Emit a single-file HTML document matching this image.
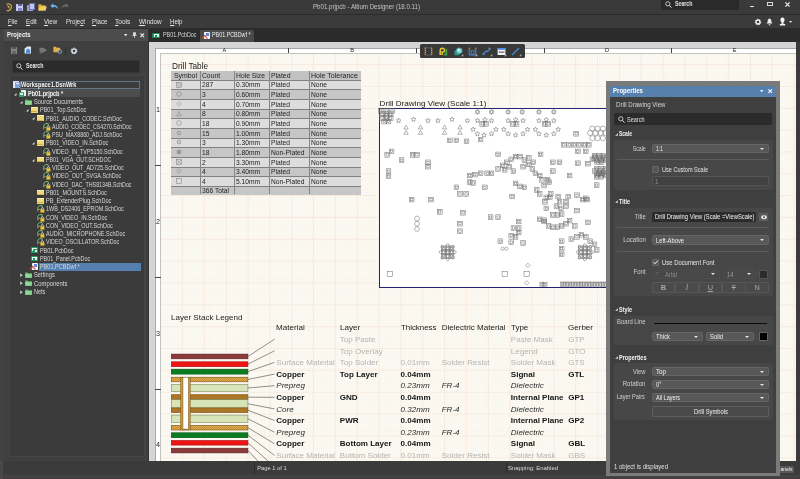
<!DOCTYPE html>
<html><head><meta charset="utf-8"><title>Pb01.prjpcb - Altium Designer (18.0.11)</title>
<style>
html,body{margin:0;padding:0;}
body{width:800px;height:479px;overflow:hidden;background:#3c3c3c;font-family:"Liberation Sans",sans-serif;position:relative;}
#root{position:absolute;left:0;top:0;width:800px;height:479px;overflow:hidden;will-change:transform;}
div{box-sizing:border-box;}
svg{position:absolute;overflow:visible;}
.dd{position:absolute;background:#585858;border:0.6px solid #656565;border-radius:1.5px;}
.dd:after{content:"";position:absolute;right:4px;top:50%;margin-top:-1px;border-left:2px solid transparent;border-right:2px solid transparent;border-top:2.5px solid #e8e8e8;}
.sec{position:absolute;left:614px;width:159px;background:#474747;border-radius:2px;}
.sep{position:absolute;left:617px;width:152px;height:1px;background:#5c5c5c;}
</style></head><body><div id="root">

<div style="position:absolute;left:0px;top:0px;width:800px;height:14px;background:#3a3a3a;"></div>
<div style="position:absolute;left:0px;top:14px;width:800px;height:1px;background:#2c2c2c;"></div>
<div style="position:absolute;left:0px;top:15px;width:800px;height:12.5px;background:#3b3b3b;"></div>
<div style="position:absolute;left:0px;top:27.5px;width:800px;height:14.5px;background:#2b2b2b;"></div>
<div style="position:absolute;top:2.30px;line-height:9px;font-size:7px;color:#c4c4c4;white-space:nowrap;left:313px;transform-origin:0 50%;transform:scaleX(0.877);">Pb01.prjpcb - Altium Designer (18.0.11)</div>
<div style="position:absolute;left:661px;top:0px;width:78px;height:9.6px;background:#2a2a2a;border-radius:0 0 2px 2px;"></div>
<svg style="left:665.3px;top:1.2px" width="7" height="7" viewBox="0 0 7 7"><circle cx="2.8" cy="2.8" r="2.1" fill="none" stroke="#e4e4e4" stroke-width="0.8"/><path d="M4.4 4.4L6.4 6.6" stroke="#e4e4e4" stroke-width="1"/></svg>
<div style="position:absolute;top:0.15px;line-height:8.3px;font-size:6.3px;color:#e0e0e0;white-space:nowrap;left:675px;transform-origin:0 50%;transform:scaleX(0.833);font-weight:bold;">Search</div>
<div style="position:absolute;left:749.5px;top:5.5px;width:4px;height:1.2px;background:#e0e0e0;"></div>
<div style="position:absolute;left:766.5px;top:1.5px;width:6px;height:4.8px;background:transparent;border:0.8px solid #d8d8d8;border-top-width:1.6px;"></div>
<svg style="left:785px;top:2px" width="5" height="5" viewBox="0 0 5 5"><path d="M0.4 0.4L4.6 4.6M4.6 0.4L0.4 4.6" stroke="#f0f0f0" stroke-width="1.2"/></svg>
<svg style="left:5px;top:3px" width="8" height="9" viewBox="0 0 8 9"><path d="M1.5 1.2C4.5 0 7 1.8 6.3 4.6C5.8 6.8 3.5 8.3 1.6 7.6M2.2 3.2C3.8 2.6 4.6 4.2 3.4 5.2" fill="none" stroke="#e2b84c" stroke-width="1.1"/></svg>
<div style="position:absolute;left:16px;top:3.5px;width:7px;height:7px;background:#c9cdf0;border-radius:0.5px;"></div>
<div style="position:absolute;left:17.5px;top:3.5px;width:4px;height:2.5px;background:#5a5fa8;"></div>
<div style="position:absolute;left:17.5px;top:7.5px;width:4px;height:3px;background:#8288c8;"></div>
<div style="position:absolute;left:27px;top:4.5px;width:6px;height:6.5px;background:#9a9fd8;"></div>
<div style="position:absolute;left:29px;top:3px;width:6px;height:6.5px;background:#c0c4ee;border:0.5px solid #6a70b0;"></div>
<svg style="left:38px;top:3px" width="9" height="8" viewBox="0 0 9 8"><path d="M0.3 7.5V1.2H3L3.8 2.2H7.5V7.5Z" fill="#d9a93a"/><path d="M0.3 7.5L1.8 3.6H8.8L7.5 7.5Z" fill="#f1cf6a"/></svg>
<svg style="left:50px;top:3px" width="9" height="7" viewBox="0 0 9 7"><path d="M0.3 2.8L3.2 0.3V1.8C6 1.8 8 3.4 8.2 6.2C7 4.4 5.4 3.9 3.2 4V5.4Z" fill="#6fa8e8"/></svg>
<svg style="left:61px;top:3px" width="8" height="6" viewBox="0 0 8 6"><path d="M7.7 2.5L5 0.3V1.6C2.6 1.6 0.8 3 0.5 5.4C1.6 3.9 3 3.5 5 3.6V4.8Z" fill="#6a6a6a"/></svg>
<div style="position:absolute;top:16.80px;line-height:9px;font-size:7px;color:#e4e4e4;white-space:nowrap;left:8px;transform-origin:0 50%;transform:scaleX(0.842);"><span style="text-decoration:underline">F</span>ile</div>
<div style="position:absolute;top:16.80px;line-height:9px;font-size:7px;color:#e4e4e4;white-space:nowrap;left:25.8px;transform-origin:0 50%;transform:scaleX(0.887);"><span style="text-decoration:underline">E</span>dit</div>
<div style="position:absolute;top:16.80px;line-height:9px;font-size:7px;color:#e4e4e4;white-space:nowrap;left:44px;transform-origin:0 50%;transform:scaleX(0.864);"><span style="text-decoration:underline">V</span>iew</div>
<div style="position:absolute;top:16.80px;line-height:9px;font-size:7px;color:#e4e4e4;white-space:nowrap;left:65.5px;transform-origin:0 50%;transform:scaleX(0.872);">Proje<span style="text-decoration:underline">c</span>t</div>
<div style="position:absolute;top:16.80px;line-height:9px;font-size:7px;color:#e4e4e4;white-space:nowrap;left:92px;transform-origin:0 50%;transform:scaleX(0.885);"><span style="text-decoration:underline">P</span>lace</div>
<div style="position:absolute;top:16.80px;line-height:9px;font-size:7px;color:#e4e4e4;white-space:nowrap;left:115.2px;transform-origin:0 50%;transform:scaleX(0.936);"><span style="text-decoration:underline">T</span>ools</div>
<div style="position:absolute;top:16.80px;line-height:9px;font-size:7px;color:#e4e4e4;white-space:nowrap;left:138.5px;transform-origin:0 50%;transform:scaleX(0.912);"><span style="text-decoration:underline">W</span>indow</div>
<div style="position:absolute;top:16.80px;line-height:9px;font-size:7px;color:#e4e4e4;white-space:nowrap;left:169.5px;transform-origin:0 50%;transform:scaleX(0.868);"><span style="text-decoration:underline">H</span>elp</div>
<svg style="left:753.5px;top:17.5px" width="8" height="8" viewBox="0 0 8 8"><circle cx="4" cy="4" r="2.3" fill="none" stroke="#eee" stroke-width="1.7" stroke-dasharray="1.2 0.6"/><circle cx="4" cy="4" r="1.9" fill="none" stroke="#eee" stroke-width="1.1"/></svg>
<svg style="left:766px;top:17.5px" width="7" height="8" viewBox="0 0 7 8"><path d="M3.5 0.5C1.8 0.8 1.6 2.5 1.6 4L0.6 5.6H6.4L5.4 4C5.4 2.5 5.2 0.8 3.5 0.5ZM2.7 6.2H4.3V7.2H2.7Z" fill="#eee"/></svg>
<svg style="left:778.5px;top:17px" width="7" height="9" viewBox="0 0 7 9"><path d="M3.5 0.4C1.7 0.4 1.3 2 1.5 3.4C1.7 4.6 2.4 5.3 2.8 5.6V6.4L0.8 7.2V8.6H6.2V7.2L4.2 6.4V5.6C4.6 5.3 5.3 4.6 5.5 3.4C5.7 2 5.3 0.4 3.5 0.4Z" fill="#f2f2f2"/></svg>
<svg style="left:789.3px;top:20.6px" width="3.2" height="2" viewBox="0 0 3.2 2"><path d="M0 0H3.2L1.6 2Z" fill="#e0e0e0"/></svg>
<div style="position:absolute;left:0px;top:29.3px;width:149px;height:431.7px;background:#3f3f3f;"></div>
<div style="position:absolute;left:0px;top:29.3px;width:3.5px;height:449.7px;background:#424244;"></div>
<div style="position:absolute;left:4px;top:29.4px;width:143.5px;height:11.8px;background:#4c4c4c;"></div>
<div style="position:absolute;left:147.5px;top:28.5px;width:1.5px;height:432.5px;background:#333;"></div>
<div style="position:absolute;top:30.30px;line-height:9px;font-size:7px;color:#f2f2f2;white-space:nowrap;left:7px;transform-origin:0 50%;transform:scaleX(0.851);font-weight:bold;">Projects</div>
<svg style="left:124.3px;top:33.8px" width="3.4" height="2.2" viewBox="0 0 3.4 2.2"><path d="M0 0H3.4L1.7 2.2Z" fill="#ececec"/></svg>
<svg style="left:131.5px;top:32px" width="5" height="6" viewBox="0 0 5 6"><path d="M1.2 0.3H3.8V3H4.6V3.8H2.9V5.8H2.1V3.8H0.4V3H1.2Z" fill="#e8e8e8"/></svg>
<svg style="left:140px;top:33px" width="4.5" height="4.5" viewBox="0 0 5 5"><path d="M0.5 0.5L4.5 4.5M4.5 0.5L0.5 4.5" stroke="#f0f0f0" stroke-width="1.2"/></svg>
<div style="position:absolute;left:10.5px;top:47px;width:6.5px;height:6.5px;background:#858585;border-radius:0.5px;"></div>
<div style="position:absolute;left:12px;top:47px;width:3.5px;height:2.2px;background:#555;"></div>
<div style="position:absolute;left:12px;top:50.5px;width:3.5px;height:3px;background:#666;"></div>
<svg style="left:24px;top:46px" width="8" height="8" viewBox="0 0 8 8"><path d="M0.6 2.6L3.4 0.6H7V7.6H0.6Z" fill="#dfe7f5"/><path d="M2 4L4.2 2.6L6.2 4V7H2Z" fill="#4f8fdc"/></svg>
<svg style="left:38.5px;top:46.5px" width="9" height="7" viewBox="0 0 9 7"><path d="M0.5 0.8H4.5L8 3.2L4.5 5.4H2.5V6.8H1.5V5.4H0.5Z" fill="#757575"/></svg>
<svg style="left:52.5px;top:46px" width="10" height="8" viewBox="0 0 10 8"><path d="M0.4 6.2V0.8H3L3.8 1.8H7.2V6.2Z" fill="#e0b243"/><circle cx="7" cy="5.6" r="1.7" fill="#3d3d3d" stroke="#8fb1dd" stroke-width="0.9"/></svg>
<div style="position:absolute;left:64.5px;top:46.5px;width:0.8px;height:8px;background:#2e2e2e;"></div>
<svg style="left:69.5px;top:46.5px" width="8" height="8" viewBox="0 0 8 8"><circle cx="4" cy="4" r="2.4" fill="none" stroke="#d4dbe6" stroke-width="1.9" stroke-dasharray="1.3 0.6"/><circle cx="4" cy="4" r="2" fill="none" stroke="#d4dbe6" stroke-width="1.2"/></svg>
<div style="position:absolute;left:12px;top:60px;width:128px;height:12.5px;background:#2b2b2b;border-radius:2px;border:0.5px solid #353535;"></div>
<svg style="left:15.6px;top:62.6px" width="7" height="7" viewBox="0 0 7 7"><circle cx="2.8" cy="2.8" r="2.1" fill="none" stroke="#e4e4e4" stroke-width="0.8"/><path d="M4.4 4.4L6.4 6.6" stroke="#e4e4e4" stroke-width="1"/></svg>
<div style="position:absolute;top:62.25px;line-height:8.3px;font-size:6.3px;color:#e8e8e8;white-space:nowrap;left:25.6px;transform-origin:0 50%;transform:scaleX(0.833);font-weight:bold;">Search</div>
<div style="position:absolute;left:8.8px;top:74.5px;width:136.5px;height:382px;background:#3b3b3b;border:0.7px solid #464646;"></div>
<div style="position:absolute;left:20.3px;top:80.8px;width:120.2px;height:8.1px;background:#3b3b3b;border:0.7px solid #66758a;"></div>
<div style="position:absolute;left:12.5px;top:81.1px;width:6.5px;height:7px;background:#dfe8f6;border-radius:0.6px;"></div>
<div style="position:absolute;left:14.5px;top:82.39999999999999px;width:5px;height:5.2px;background:#7fa4dc;border-radius:0.5px;"></div>
<div style="position:absolute;left:15.5px;top:83.39999999999999px;width:3px;height:1px;background:#e8f0fb;"></div>
<div style="position:absolute;top:81.15px;line-height:8.5px;font-size:6.5px;color:#f4f4f4;white-space:nowrap;left:21.3px;transform-origin:0 50%;transform:scaleX(0.860);font-weight:bold;">Workspace1.DsnWrk</div>
<div style="position:absolute;left:20.3px;top:89.45px;width:120.2px;height:7.8px;background:#4d4d4d;"></div>
<svg style="left:13.8px;top:92.55px" width="2.6" height="2.6" viewBox="0 0 4 4"><path d="M3.9 0.1V3.9H0.1Z" fill="#e4e4e4"/></svg>
<div style="position:absolute;left:20.5px;top:89.75px;width:5.2px;height:6.6px;background:#e8f2f5;border-radius:0.5px;"></div>
<div style="position:absolute;left:18.5px;top:91.95px;width:5.6px;height:4.6px;background:#2aa267;border-radius:0.4px;"></div>
<div style="position:absolute;left:20px;top:93.35px;width:2.6px;height:1.6px;background:#d6f3e2;"></div>
<div style="position:absolute;top:89.80px;line-height:8.5px;font-size:6.5px;color:#f4f4f4;white-space:nowrap;left:27.6px;transform-origin:0 50%;transform:scaleX(0.845);font-weight:bold;">Pb01.prjpcb *</div>
<svg style="left:20.3px;top:100.80px" width="2.6" height="2.6" viewBox="0 0 4 4"><path d="M3.9 0.1V3.9H0.1Z" fill="#e4e4e4"/></svg>
<svg style="left:24.6px;top:98.80px" width="7" height="6" viewBox="0 0 7 6"><path d="M0.2 5.8V0.4H2.6L3.2 1.2H6.8V5.8Z" fill="#5fbb6c"/><path d="M0.2 5.8V2H6.8V5.8Z" fill="#8fd694"/></svg>
<div style="position:absolute;top:98.05px;line-height:8.5px;font-size:6.5px;color:#d8d8d8;white-space:nowrap;left:33.8px;transform-origin:0 50%;transform:scaleX(0.885);">Source Documents</div>
<svg style="left:26.400000000000002px;top:109.05px" width="2.6" height="2.6" viewBox="0 0 4 4"><path d="M3.9 0.1V3.9H0.1Z" fill="#e4e4e4"/></svg>
<div style="position:absolute;left:30.5px;top:107.05px;width:7px;height:5.8px;background:#efd976;border-top:1.7px solid #fbf1bd;border-radius:0.3px;"></div>
<div style="position:absolute;left:31.3px;top:111.25px;width:5.4px;height:0.8px;background:#cfae4e;"></div>
<div style="position:absolute;top:106.30px;line-height:8.5px;font-size:6.5px;color:#d8d8d8;white-space:nowrap;left:40.1px;transform-origin:0 50%;transform:scaleX(0.850);">PB01_Top.SchDoc</div>
<svg style="left:32.400000000000006px;top:117.30px" width="2.6" height="2.6" viewBox="0 0 4 4"><path d="M3.9 0.1V3.9H0.1Z" fill="#e4e4e4"/></svg>
<div style="position:absolute;left:36.5px;top:115.3px;width:7px;height:5.8px;background:#efd976;border-top:1.7px solid #fbf1bd;border-radius:0.3px;"></div>
<div style="position:absolute;left:37.3px;top:119.5px;width:5.4px;height:0.8px;background:#cfae4e;"></div>
<div style="position:absolute;top:114.55px;line-height:8.5px;font-size:6.5px;color:#d8d8d8;white-space:nowrap;left:46.1px;transform-origin:0 50%;transform:scaleX(0.827);">PB01_AUDIO_CODEC.SchDoc</div>
<svg style="left:42.900000000000006px;top:122.75px" width="7.6" height="7.8" viewBox="0 0 7.6 7.8"><path d="M0.8 6.4V2.2L2.6 0.6H5.2V2.6" fill="none" stroke="#7cc47e" stroke-width="0.9"/><path d="M1.2 4.4H3.4" stroke="#7cc47e" stroke-width="0.8"/><path d="M4.4 4.4V3.6C4.4 2.4 6.4 2.4 6.4 3.6V4.4" fill="none" stroke="#f3f0d8" stroke-width="0.8"/><rect x="3.4" y="4.3" width="4" height="3.3" fill="#e9c23f"/></svg>
<div style="position:absolute;top:122.80px;line-height:8.5px;font-size:6.5px;color:#d8d8d8;white-space:nowrap;left:52.1px;transform-origin:0 50%;transform:scaleX(0.800);">AUDIO_CODEC_CS4270.SchDoc</div>
<svg style="left:42.900000000000006px;top:131.00px" width="7.6" height="7.8" viewBox="0 0 7.6 7.8"><path d="M0.8 6.4V2.2L2.6 0.6H5.2V2.6" fill="none" stroke="#7cc47e" stroke-width="0.9"/><path d="M1.2 4.4H3.4" stroke="#7cc47e" stroke-width="0.8"/><path d="M4.4 4.4V3.6C4.4 2.4 6.4 2.4 6.4 3.6V4.4" fill="none" stroke="#f3f0d8" stroke-width="0.8"/><rect x="3.4" y="4.3" width="4" height="3.3" fill="#e9c23f"/></svg>
<div style="position:absolute;top:131.05px;line-height:8.5px;font-size:6.5px;color:#d8d8d8;white-space:nowrap;left:52.1px;transform-origin:0 50%;transform:scaleX(0.813);">PSU_MAX8860_ADJ.SchDoc</div>
<svg style="left:32.400000000000006px;top:142.05px" width="2.6" height="2.6" viewBox="0 0 4 4"><path d="M3.9 0.1V3.9H0.1Z" fill="#e4e4e4"/></svg>
<div style="position:absolute;left:36.5px;top:140.04999999999998px;width:7px;height:5.8px;background:#efd976;border-top:1.7px solid #fbf1bd;border-radius:0.3px;"></div>
<div style="position:absolute;left:37.3px;top:144.24999999999997px;width:5.4px;height:0.8px;background:#cfae4e;"></div>
<div style="position:absolute;top:139.30px;line-height:8.5px;font-size:6.5px;color:#d8d8d8;white-space:nowrap;left:46.1px;transform-origin:0 50%;transform:scaleX(0.836);">PB01_VIDEO_IN.SchDoc</div>
<svg style="left:42.900000000000006px;top:147.50px" width="7.6" height="7.8" viewBox="0 0 7.6 7.8"><path d="M0.8 6.4V2.2L2.6 0.6H5.2V2.6" fill="none" stroke="#7cc47e" stroke-width="0.9"/><path d="M1.2 4.4H3.4" stroke="#7cc47e" stroke-width="0.8"/><path d="M4.4 4.4V3.6C4.4 2.4 6.4 2.4 6.4 3.6V4.4" fill="none" stroke="#f3f0d8" stroke-width="0.8"/><rect x="3.4" y="4.3" width="4" height="3.3" fill="#e9c23f"/></svg>
<div style="position:absolute;top:147.55px;line-height:8.5px;font-size:6.5px;color:#d8d8d8;white-space:nowrap;left:52.1px;transform-origin:0 50%;transform:scaleX(0.826);">VIDEO_IN_TVP5150.SchDoc</div>
<svg style="left:32.400000000000006px;top:158.55px" width="2.6" height="2.6" viewBox="0 0 4 4"><path d="M3.9 0.1V3.9H0.1Z" fill="#e4e4e4"/></svg>
<div style="position:absolute;left:36.5px;top:156.54999999999998px;width:7px;height:5.8px;background:#efd976;border-top:1.7px solid #fbf1bd;border-radius:0.3px;"></div>
<div style="position:absolute;left:37.3px;top:160.74999999999997px;width:5.4px;height:0.8px;background:#cfae4e;"></div>
<div style="position:absolute;top:155.80px;line-height:8.5px;font-size:6.5px;color:#d8d8d8;white-space:nowrap;left:46.1px;transform-origin:0 50%;transform:scaleX(0.819);">PB01_VGA_OUT.SCHDOC</div>
<svg style="left:42.900000000000006px;top:164.00px" width="7.6" height="7.8" viewBox="0 0 7.6 7.8"><path d="M0.8 6.4V2.2L2.6 0.6H5.2V2.6" fill="none" stroke="#7cc47e" stroke-width="0.9"/><path d="M1.2 4.4H3.4" stroke="#7cc47e" stroke-width="0.8"/><path d="M4.4 4.4V3.6C4.4 2.4 6.4 2.4 6.4 3.6V4.4" fill="none" stroke="#f3f0d8" stroke-width="0.8"/><rect x="3.4" y="4.3" width="4" height="3.3" fill="#e9c23f"/></svg>
<div style="position:absolute;top:164.05px;line-height:8.5px;font-size:6.5px;color:#d8d8d8;white-space:nowrap;left:52.1px;transform-origin:0 50%;transform:scaleX(0.837);">VIDEO_OUT_AD725.SchDoc</div>
<svg style="left:42.900000000000006px;top:172.25px" width="7.6" height="7.8" viewBox="0 0 7.6 7.8"><path d="M0.8 6.4V2.2L2.6 0.6H5.2V2.6" fill="none" stroke="#7cc47e" stroke-width="0.9"/><path d="M1.2 4.4H3.4" stroke="#7cc47e" stroke-width="0.8"/><path d="M4.4 4.4V3.6C4.4 2.4 6.4 2.4 6.4 3.6V4.4" fill="none" stroke="#f3f0d8" stroke-width="0.8"/><rect x="3.4" y="4.3" width="4" height="3.3" fill="#e9c23f"/></svg>
<div style="position:absolute;top:172.30px;line-height:8.5px;font-size:6.5px;color:#d8d8d8;white-space:nowrap;left:52.1px;transform-origin:0 50%;transform:scaleX(0.826);">VIDEO_OUT_SVGA.SchDoc</div>
<svg style="left:42.900000000000006px;top:180.50px" width="7.6" height="7.8" viewBox="0 0 7.6 7.8"><path d="M0.8 6.4V2.2L2.6 0.6H5.2V2.6" fill="none" stroke="#7cc47e" stroke-width="0.9"/><path d="M1.2 4.4H3.4" stroke="#7cc47e" stroke-width="0.8"/><path d="M4.4 4.4V3.6C4.4 2.4 6.4 2.4 6.4 3.6V4.4" fill="none" stroke="#f3f0d8" stroke-width="0.8"/><rect x="3.4" y="4.3" width="4" height="3.3" fill="#e9c23f"/></svg>
<div style="position:absolute;top:180.55px;line-height:8.5px;font-size:6.5px;color:#d8d8d8;white-space:nowrap;left:52.1px;transform-origin:0 50%;transform:scaleX(0.815);">VIDEO_DAC_THS8134B.SchDoc</div>
<div style="position:absolute;left:36.5px;top:189.54999999999998px;width:7px;height:5.8px;background:#efd976;border-top:1.7px solid #fbf1bd;border-radius:0.3px;"></div>
<div style="position:absolute;left:37.3px;top:193.74999999999997px;width:5.4px;height:0.8px;background:#cfae4e;"></div>
<div style="position:absolute;top:188.80px;line-height:8.5px;font-size:6.5px;color:#d8d8d8;white-space:nowrap;left:46.1px;transform-origin:0 50%;transform:scaleX(0.840);">PB01_MOUNTS.SchDoc</div>
<div style="position:absolute;left:36.5px;top:197.79999999999998px;width:7px;height:5.8px;background:#efd976;border-top:1.7px solid #fbf1bd;border-radius:0.3px;"></div>
<div style="position:absolute;left:37.3px;top:201.99999999999997px;width:5.4px;height:0.8px;background:#cfae4e;"></div>
<div style="position:absolute;top:197.05px;line-height:8.5px;font-size:6.5px;color:#d8d8d8;white-space:nowrap;left:46.1px;transform-origin:0 50%;transform:scaleX(0.862);">PB_ExtenderPlug.SchDoc</div>
<svg style="left:36.900000000000006px;top:205.25px" width="7.6" height="7.8" viewBox="0 0 7.6 7.8"><path d="M0.8 6.4V2.2L2.6 0.6H5.2V2.6" fill="none" stroke="#7cc47e" stroke-width="0.9"/><path d="M1.2 4.4H3.4" stroke="#7cc47e" stroke-width="0.8"/><path d="M4.4 4.4V3.6C4.4 2.4 6.4 2.4 6.4 3.6V4.4" fill="none" stroke="#f3f0d8" stroke-width="0.8"/><rect x="3.4" y="4.3" width="4" height="3.3" fill="#e9c23f"/></svg>
<div style="position:absolute;top:205.30px;line-height:8.5px;font-size:6.5px;color:#d8d8d8;white-space:nowrap;left:46.1px;transform-origin:0 50%;transform:scaleX(0.834);">1WB_DS2406_EPROM.SchDoc</div>
<svg style="left:36.900000000000006px;top:213.50px" width="7.6" height="7.8" viewBox="0 0 7.6 7.8"><path d="M0.8 6.4V2.2L2.6 0.6H5.2V2.6" fill="none" stroke="#7cc47e" stroke-width="0.9"/><path d="M1.2 4.4H3.4" stroke="#7cc47e" stroke-width="0.8"/><path d="M4.4 4.4V3.6C4.4 2.4 6.4 2.4 6.4 3.6V4.4" fill="none" stroke="#f3f0d8" stroke-width="0.8"/><rect x="3.4" y="4.3" width="4" height="3.3" fill="#e9c23f"/></svg>
<div style="position:absolute;top:213.55px;line-height:8.5px;font-size:6.5px;color:#d8d8d8;white-space:nowrap;left:46.1px;transform-origin:0 50%;transform:scaleX(0.839);">CON_VIDEO_IN.SchDoc</div>
<svg style="left:36.900000000000006px;top:221.75px" width="7.6" height="7.8" viewBox="0 0 7.6 7.8"><path d="M0.8 6.4V2.2L2.6 0.6H5.2V2.6" fill="none" stroke="#7cc47e" stroke-width="0.9"/><path d="M1.2 4.4H3.4" stroke="#7cc47e" stroke-width="0.8"/><path d="M4.4 4.4V3.6C4.4 2.4 6.4 2.4 6.4 3.6V4.4" fill="none" stroke="#f3f0d8" stroke-width="0.8"/><rect x="3.4" y="4.3" width="4" height="3.3" fill="#e9c23f"/></svg>
<div style="position:absolute;top:221.80px;line-height:8.5px;font-size:6.5px;color:#d8d8d8;white-space:nowrap;left:46.1px;transform-origin:0 50%;transform:scaleX(0.839);">CON_VIDEO_OUT.SchDoc</div>
<svg style="left:36.900000000000006px;top:230.00px" width="7.6" height="7.8" viewBox="0 0 7.6 7.8"><path d="M0.8 6.4V2.2L2.6 0.6H5.2V2.6" fill="none" stroke="#7cc47e" stroke-width="0.9"/><path d="M1.2 4.4H3.4" stroke="#7cc47e" stroke-width="0.8"/><path d="M4.4 4.4V3.6C4.4 2.4 6.4 2.4 6.4 3.6V4.4" fill="none" stroke="#f3f0d8" stroke-width="0.8"/><rect x="3.4" y="4.3" width="4" height="3.3" fill="#e9c23f"/></svg>
<div style="position:absolute;top:230.05px;line-height:8.5px;font-size:6.5px;color:#d8d8d8;white-space:nowrap;left:46.1px;transform-origin:0 50%;transform:scaleX(0.847);">AUDIO_MICROPHONE.SchDoc</div>
<svg style="left:36.900000000000006px;top:238.25px" width="7.6" height="7.8" viewBox="0 0 7.6 7.8"><path d="M0.8 6.4V2.2L2.6 0.6H5.2V2.6" fill="none" stroke="#7cc47e" stroke-width="0.9"/><path d="M1.2 4.4H3.4" stroke="#7cc47e" stroke-width="0.8"/><path d="M4.4 4.4V3.6C4.4 2.4 6.4 2.4 6.4 3.6V4.4" fill="none" stroke="#f3f0d8" stroke-width="0.8"/><rect x="3.4" y="4.3" width="4" height="3.3" fill="#e9c23f"/></svg>
<div style="position:absolute;top:238.30px;line-height:8.5px;font-size:6.5px;color:#d8d8d8;white-space:nowrap;left:46.1px;transform-origin:0 50%;transform:scaleX(0.823);">VIDEO_OSCILLATOR.SchDoc</div>
<div style="position:absolute;left:30.6px;top:247.29999999999998px;width:7.4px;height:5.6px;background:#1f9d62;border-radius:0.4px;"></div>
<div style="position:absolute;left:31.6px;top:248.29999999999998px;width:1px;height:3.2px;background:#e8fff0;"></div>
<div style="position:absolute;left:33.2px;top:248.29999999999998px;width:3.6px;height:0.9px;background:#e8fff0;"></div>
<div style="position:absolute;left:35.0px;top:249.89999999999998px;width:2px;height:2px;background:#c8f5d8;"></div>
<div style="position:absolute;top:246.55px;line-height:8.5px;font-size:6.5px;color:#d8d8d8;white-space:nowrap;left:40.1px;transform-origin:0 50%;transform:scaleX(0.823);">PB01.PcbDoc</div>
<div style="position:absolute;left:30.6px;top:255.55px;width:7.4px;height:5.6px;background:#1f9d62;border-radius:0.4px;"></div>
<div style="position:absolute;left:31.6px;top:256.55px;width:1px;height:3.2px;background:#e8fff0;"></div>
<div style="position:absolute;left:33.2px;top:256.55px;width:3.6px;height:0.9px;background:#e8fff0;"></div>
<div style="position:absolute;left:35.0px;top:258.15000000000003px;width:2px;height:2px;background:#c8f5d8;"></div>
<div style="position:absolute;top:254.80px;line-height:8.5px;font-size:6.5px;color:#d8d8d8;white-space:nowrap;left:40.1px;transform-origin:0 50%;transform:scaleX(0.825);">PB01_Panel.PcbDoc</div>
<div style="position:absolute;left:38.5px;top:262.6px;width:102px;height:8px;background:#557fb0;"></div>
<div style="position:absolute;left:32.2px;top:263.2px;width:5.4px;height:7px;background:#f4f6fb;border-radius:0.4px;"></div>
<div style="position:absolute;left:33.6px;top:264.2px;width:3.2px;height:3px;background:#5f86d8;"></div>
<svg style="left:29.6px;top:266.20px" width="6" height="4" viewBox="0 0 6 4"><path d="M0.3 3.6L2.6 0.4L5.4 3.6" fill="none" stroke="#d4503c" stroke-width="1.1"/></svg>
<div style="position:absolute;top:263.05px;line-height:8.5px;font-size:6.5px;color:#d8d8d8;white-space:nowrap;left:40.1px;transform-origin:0 50%;transform:scaleX(0.850);">PB01.PCBDwf *</div>
<svg style="left:20.1px;top:273.05px" width="3" height="4.4" viewBox="0 0 3 4.4"><path d="M0.3 0.3L2.7 2.2L0.3 4.1Z" fill="#dcdcdc"/></svg>
<svg style="left:24.8px;top:272.05px" width="7" height="6" viewBox="0 0 7 6"><path d="M0.2 5.8V0.4H2.6L3.2 1.2H6.8V5.8Z" fill="#5fbb6c"/><path d="M0.2 5.8V2H6.8V5.8Z" fill="#8fd694"/></svg>
<div style="position:absolute;top:271.30px;line-height:8.5px;font-size:6.5px;color:#d8d8d8;white-space:nowrap;left:33.8px;transform-origin:0 50%;transform:scaleX(0.886);">Settings</div>
<svg style="left:20.1px;top:281.30px" width="3" height="4.4" viewBox="0 0 3 4.4"><path d="M0.3 0.3L2.7 2.2L0.3 4.1Z" fill="#dcdcdc"/></svg>
<svg style="left:24.8px;top:280.30px" width="7" height="6" viewBox="0 0 7 6"><path d="M0.2 5.8V0.4H2.6L3.2 1.2H6.8V5.8Z" fill="#5fbb6c"/><path d="M0.2 5.8V2H6.8V5.8Z" fill="#8fd694"/></svg>
<div style="position:absolute;top:279.55px;line-height:8.5px;font-size:6.5px;color:#d8d8d8;white-space:nowrap;left:33.8px;transform-origin:0 50%;transform:scaleX(0.906);">Components</div>
<svg style="left:20.1px;top:289.55px" width="3" height="4.4" viewBox="0 0 3 4.4"><path d="M0.3 0.3L2.7 2.2L0.3 4.1Z" fill="#dcdcdc"/></svg>
<svg style="left:24.8px;top:288.55px" width="7" height="6" viewBox="0 0 7 6"><path d="M0.2 5.8V0.4H2.6L3.2 1.2H6.8V5.8Z" fill="#5fbb6c"/><path d="M0.2 5.8V2H6.8V5.8Z" fill="#8fd694"/></svg>
<div style="position:absolute;top:287.80px;line-height:8.5px;font-size:6.5px;color:#d8d8d8;white-space:nowrap;left:33.8px;transform-origin:0 50%;transform:scaleX(0.845);">Nets</div>
<div style="position:absolute;left:149.5px;top:30px;width:1.5px;height:11.5px;background:#2b2b2b;"></div>
<div style="position:absolute;left:200px;top:29.5px;width:53.5px;height:12px;background:#4b4b4b;border-radius:1.5px 1.5px 0 0"></div>
<div style="position:absolute;left:152.3px;top:32.6px;width:7.8px;height:5.6px;background:#1b8658;border-radius:0.4px;"></div>
<div style="position:absolute;left:153.5px;top:33.5px;width:1px;height:3.4px;background:#e8fff0;"></div>
<div style="position:absolute;left:155.2px;top:33.5px;width:3.8px;height:0.9px;background:#e8fff0;"></div>
<div style="position:absolute;left:157px;top:35px;width:2px;height:2px;background:#c8f5d8;"></div>
<div style="position:absolute;top:31.35px;line-height:8.5px;font-size:6.5px;color:#d6d6d6;white-space:nowrap;left:162.5px;transform-origin:0 50%;transform:scaleX(0.828);">PB01.PcbDoc</div>
<div style="position:absolute;left:204.2px;top:32px;width:5.4px;height:7px;background:#f4f6fb;border-radius:0.4px;"></div>
<div style="position:absolute;left:205.6px;top:33px;width:3.2px;height:3px;background:#5f86d8;"></div>
<svg style="left:201.5px;top:35px" width="6" height="4" viewBox="0 0 6 4"><path d="M0.3 3.6L2.6 0.4L5.4 3.6" fill="none" stroke="#d4503c" stroke-width="1.1"/></svg>
<div style="position:absolute;top:31.35px;line-height:8.5px;font-size:6.5px;color:#ececec;white-space:nowrap;left:212px;transform-origin:0 50%;transform:scaleX(0.826);">PB01.PCBDwf *</div>
<div id="doc" style="position:absolute;left:149px;top:42px;width:647px;height:419px;background:#d5d5d5;overflow:hidden;">
<div style="position:absolute;left:5.8px;top:5.9px;width:700px;height:500px;background:#fff;border:0.6px solid #a8a8a8;"></div>
<div style="position:absolute;left:10.9px;top:11px;width:700px;height:500px;border:0.7px solid #c4c4c4;background-color:#fcfaf4;background-image:linear-gradient(to right,#f7eade 0,#f7eade 0.7px,transparent 0.7px),linear-gradient(to bottom,#f7eade 0,#f7eade 0.7px,transparent 0.7px),linear-gradient(to right,rgba(225,200,170,0.07) 0,rgba(225,200,170,0.07) 0.7px,transparent 0.7px),linear-gradient(to bottom,rgba(225,200,170,0.07) 0,rgba(225,200,170,0.07) 0.7px,transparent 0.7px);background-size:21.85px 21.85px,21.85px 21.85px,2.185px 2.185px,2.185px 2.185px;background-position:21px 10.1px,21px 10.1px,21px 10.1px,21px 10.1px;"></div>
</div>
<div style="position:absolute;top:47.20px;line-height:7.6px;font-size:5.6px;color:#222;white-space:nowrap;left:224.3px;transform:translateX(-50%);">A</div>
<div style="position:absolute;top:47.20px;line-height:7.6px;font-size:5.6px;color:#222;white-space:nowrap;left:352px;transform:translateX(-50%);">B</div>
<div style="position:absolute;top:47.20px;line-height:7.6px;font-size:5.6px;color:#222;white-space:nowrap;left:479.8px;transform:translateX(-50%);">C</div>
<div style="position:absolute;top:47.20px;line-height:7.6px;font-size:5.6px;color:#222;white-space:nowrap;left:607px;transform:translateX(-50%);">D</div>
<div style="position:absolute;top:47.20px;line-height:7.6px;font-size:5.6px;color:#222;white-space:nowrap;left:734.5px;transform:translateX(-50%);">E</div>
<div style="position:absolute;left:288.2px;top:48.3px;width:0.7px;height:5.2px;background:#444;"></div>
<div style="position:absolute;left:415.9px;top:48.3px;width:0.7px;height:5.2px;background:#444;"></div>
<div style="position:absolute;left:543.5px;top:48.3px;width:0.7px;height:5.2px;background:#444;"></div>
<div style="position:absolute;left:671.3px;top:48.3px;width:0.7px;height:5.2px;background:#444;"></div>
<div style="position:absolute;top:105.20px;line-height:9.2px;font-size:7.2px;color:#222;white-space:nowrap;left:158px;transform:translateX(-50%);">1</div>
<div style="position:absolute;top:216.60px;line-height:9.2px;font-size:7.2px;color:#222;white-space:nowrap;left:158px;transform:translateX(-50%);">2</div>
<div style="position:absolute;top:328.60px;line-height:9.2px;font-size:7.2px;color:#222;white-space:nowrap;left:158px;transform:translateX(-50%);">3</div>
<div style="position:absolute;top:440.00px;line-height:9.2px;font-size:7.2px;color:#222;white-space:nowrap;left:158px;transform:translateX(-50%);">4</div>
<div style="position:absolute;left:155.2px;top:165.2px;width:5.4px;height:0.7px;background:#444;"></div>
<div style="position:absolute;left:155.2px;top:277px;width:5.4px;height:0.7px;background:#444;"></div>
<div style="position:absolute;left:155.2px;top:389px;width:5.4px;height:0.7px;background:#444;"></div>
<div style="position:absolute;top:61.60px;line-height:10.2px;font-size:8.2px;color:#1c1c1c;white-space:nowrap;left:171.8px;transform-origin:0 50%;transform:scaleX(1.010);">Drill Table</div>
<div style="position:absolute;left:171.3px;top:70.6px;width:189.4px;height:124.5px;background:#c6c6c6;border:0.6px solid #707070;"></div>
<div style="position:absolute;left:171.3px;top:70.6px;width:189.39999999999998px;height:9.6px;background:#c2c2c2;"></div>
<div style="position:absolute;top:71.00px;line-height:9px;font-size:7px;color:#1e1e1e;white-space:nowrap;left:173.9px;transform-origin:0 50%;transform:scaleX(0.985);">Symbol</div>
<div style="position:absolute;top:71.00px;line-height:9px;font-size:7px;color:#1e1e1e;white-space:nowrap;left:201.79999999999998px;transform-origin:0 50%;transform:scaleX(0.964);">Count</div>
<div style="position:absolute;top:71.00px;line-height:9px;font-size:7px;color:#1e1e1e;white-space:nowrap;left:236.39999999999998px;transform-origin:0 50%;transform:scaleX(0.968);">Hole Size</div>
<div style="position:absolute;top:71.00px;line-height:9px;font-size:7px;color:#1e1e1e;white-space:nowrap;left:270.9px;transform-origin:0 50%;transform:scaleX(0.982);">Plated</div>
<div style="position:absolute;top:71.00px;line-height:9px;font-size:7px;color:#1e1e1e;white-space:nowrap;left:310.7px;transform-origin:0 50%;transform:scaleX(1.005);">Hole Tolerance</div>
<div style="position:absolute;left:171.3px;top:79.6px;width:189.39999999999998px;height:10.264999999999992px;background:#dddddd;"></div>
<svg style="left:175.80px;top:81.50px" width="6" height="6" viewBox="-3 -3 6 6"><g fill="none" stroke="#707070" stroke-width="0.45"><rect x="-2.3" y="-2.3" width="4.6" height="4.6"/><rect x="-1.15" y="-1.15" width="2.3" height="2.3"/></g></svg>
<div style="position:absolute;top:81.30px;line-height:8.9px;font-size:6.9px;color:#1e1e1e;white-space:nowrap;left:201.79999999999998px;transform:scaleX(0.97);transform-origin:0 50%;">287</div>
<div style="position:absolute;top:81.30px;line-height:8.9px;font-size:6.9px;color:#1e1e1e;white-space:nowrap;left:236.39999999999998px;transform:scaleX(0.97);transform-origin:0 50%;">0.30mm</div>
<div style="position:absolute;top:81.30px;line-height:8.9px;font-size:6.9px;color:#1e1e1e;white-space:nowrap;left:270.9px;transform:scaleX(0.97);transform-origin:0 50%;">Plated</div>
<div style="position:absolute;top:81.30px;line-height:8.9px;font-size:6.9px;color:#1e1e1e;white-space:nowrap;left:310.7px;transform:scaleX(0.97);transform-origin:0 50%;">None</div>
<div style="position:absolute;left:171.3px;top:89.26499999999999px;width:189.39999999999998px;height:10.265000000000006px;background:#c6c6c6;"></div>
<svg style="left:175.80px;top:91.16px" width="6" height="6" viewBox="-3 -3 6 6"><g fill="none" stroke="#707070" stroke-width="0.45"><circle r="2.3"/></g></svg>
<div style="position:absolute;top:90.96px;line-height:8.9px;font-size:6.9px;color:#1e1e1e;white-space:nowrap;left:201.79999999999998px;transform:scaleX(0.97);transform-origin:0 50%;">3</div>
<div style="position:absolute;top:90.96px;line-height:8.9px;font-size:6.9px;color:#1e1e1e;white-space:nowrap;left:236.39999999999998px;transform:scaleX(0.97);transform-origin:0 50%;">0.60mm</div>
<div style="position:absolute;top:90.96px;line-height:8.9px;font-size:6.9px;color:#1e1e1e;white-space:nowrap;left:270.9px;transform:scaleX(0.97);transform-origin:0 50%;">Plated</div>
<div style="position:absolute;top:90.96px;line-height:8.9px;font-size:6.9px;color:#1e1e1e;white-space:nowrap;left:310.7px;transform:scaleX(0.97);transform-origin:0 50%;">None</div>
<div style="position:absolute;left:171.3px;top:98.92999999999999px;width:189.39999999999998px;height:10.265000000000006px;background:#dddddd;"></div>
<svg style="left:175.80px;top:100.83px" width="6" height="6" viewBox="-3 -3 6 6"><g fill="none" stroke="#707070" stroke-width="0.45"><path d="M0 -2.3L2.3 0L0 2.3L-2.3 0Z"/></g></svg>
<div style="position:absolute;top:100.63px;line-height:8.9px;font-size:6.9px;color:#1e1e1e;white-space:nowrap;left:201.79999999999998px;transform:scaleX(0.97);transform-origin:0 50%;">4</div>
<div style="position:absolute;top:100.63px;line-height:8.9px;font-size:6.9px;color:#1e1e1e;white-space:nowrap;left:236.39999999999998px;transform:scaleX(0.97);transform-origin:0 50%;">0.70mm</div>
<div style="position:absolute;top:100.63px;line-height:8.9px;font-size:6.9px;color:#1e1e1e;white-space:nowrap;left:270.9px;transform:scaleX(0.97);transform-origin:0 50%;">Plated</div>
<div style="position:absolute;top:100.63px;line-height:8.9px;font-size:6.9px;color:#1e1e1e;white-space:nowrap;left:310.7px;transform:scaleX(0.97);transform-origin:0 50%;">None</div>
<div style="position:absolute;left:171.3px;top:108.595px;width:189.39999999999998px;height:10.264999999999992px;background:#c6c6c6;"></div>
<svg style="left:175.80px;top:110.50px" width="6" height="6" viewBox="-3 -3 6 6"><g fill="none" stroke="#707070" stroke-width="0.45"><path d="M0 -2.3L2.3 1.8399999999999999L-2.3 1.8399999999999999Z"/></g></svg>
<div style="position:absolute;top:110.30px;line-height:8.9px;font-size:6.9px;color:#1e1e1e;white-space:nowrap;left:201.79999999999998px;transform:scaleX(0.97);transform-origin:0 50%;">8</div>
<div style="position:absolute;top:110.30px;line-height:8.9px;font-size:6.9px;color:#1e1e1e;white-space:nowrap;left:236.39999999999998px;transform:scaleX(0.97);transform-origin:0 50%;">0.80mm</div>
<div style="position:absolute;top:110.30px;line-height:8.9px;font-size:6.9px;color:#1e1e1e;white-space:nowrap;left:270.9px;transform:scaleX(0.97);transform-origin:0 50%;">Plated</div>
<div style="position:absolute;top:110.30px;line-height:8.9px;font-size:6.9px;color:#1e1e1e;white-space:nowrap;left:310.7px;transform:scaleX(0.97);transform-origin:0 50%;">None</div>
<div style="position:absolute;left:171.3px;top:118.25999999999999px;width:189.39999999999998px;height:10.264999999999992px;background:#dddddd;"></div>
<svg style="left:175.80px;top:120.16px" width="6" height="6" viewBox="-3 -3 6 6"><g fill="none" stroke="#707070" stroke-width="0.45"><circle r="2.3"/></g></svg>
<div style="position:absolute;top:119.96px;line-height:8.9px;font-size:6.9px;color:#1e1e1e;white-space:nowrap;left:201.79999999999998px;transform:scaleX(0.97);transform-origin:0 50%;">18</div>
<div style="position:absolute;top:119.96px;line-height:8.9px;font-size:6.9px;color:#1e1e1e;white-space:nowrap;left:236.39999999999998px;transform:scaleX(0.97);transform-origin:0 50%;">0.90mm</div>
<div style="position:absolute;top:119.96px;line-height:8.9px;font-size:6.9px;color:#1e1e1e;white-space:nowrap;left:270.9px;transform:scaleX(0.97);transform-origin:0 50%;">Plated</div>
<div style="position:absolute;top:119.96px;line-height:8.9px;font-size:6.9px;color:#1e1e1e;white-space:nowrap;left:310.7px;transform:scaleX(0.97);transform-origin:0 50%;">None</div>
<div style="position:absolute;left:171.3px;top:127.92499999999998px;width:189.39999999999998px;height:10.264999999999992px;background:#c6c6c6;"></div>
<svg style="left:175.80px;top:129.82px" width="6" height="6" viewBox="-3 -3 6 6"><g fill="none" stroke="#707070" stroke-width="0.45"><path d="M0.00 -2.30L0.68 -0.93L2.19 -0.71L1.09 0.36L1.35 1.86L0.00 1.15L-1.35 1.86L-1.09 0.36L-2.19 -0.71L-0.68 -0.93Z"/></g></svg>
<div style="position:absolute;top:129.62px;line-height:8.9px;font-size:6.9px;color:#1e1e1e;white-space:nowrap;left:201.79999999999998px;transform:scaleX(0.97);transform-origin:0 50%;">15</div>
<div style="position:absolute;top:129.62px;line-height:8.9px;font-size:6.9px;color:#1e1e1e;white-space:nowrap;left:236.39999999999998px;transform:scaleX(0.97);transform-origin:0 50%;">1.00mm</div>
<div style="position:absolute;top:129.62px;line-height:8.9px;font-size:6.9px;color:#1e1e1e;white-space:nowrap;left:270.9px;transform:scaleX(0.97);transform-origin:0 50%;">Plated</div>
<div style="position:absolute;top:129.62px;line-height:8.9px;font-size:6.9px;color:#1e1e1e;white-space:nowrap;left:310.7px;transform:scaleX(0.97);transform-origin:0 50%;">None</div>
<div style="position:absolute;left:171.3px;top:137.58999999999997px;width:189.39999999999998px;height:10.26500000000002px;background:#dddddd;"></div>
<svg style="left:175.80px;top:139.49px" width="6" height="6" viewBox="-3 -3 6 6"><g fill="none" stroke="#707070" stroke-width="0.45"><path d="M0.00 -2.30L0.57 -1.00L1.99 -1.15L1.15 0.00L1.99 1.15L0.57 1.00L0.00 2.30L-0.57 1.00L-1.99 1.15L-1.15 0.00L-1.99 -1.15L-0.58 -1.00Z"/></g></svg>
<div style="position:absolute;top:139.29px;line-height:8.9px;font-size:6.9px;color:#1e1e1e;white-space:nowrap;left:201.79999999999998px;transform:scaleX(0.97);transform-origin:0 50%;">3</div>
<div style="position:absolute;top:139.29px;line-height:8.9px;font-size:6.9px;color:#1e1e1e;white-space:nowrap;left:236.39999999999998px;transform:scaleX(0.97);transform-origin:0 50%;">1.30mm</div>
<div style="position:absolute;top:139.29px;line-height:8.9px;font-size:6.9px;color:#1e1e1e;white-space:nowrap;left:270.9px;transform:scaleX(0.97);transform-origin:0 50%;">Plated</div>
<div style="position:absolute;top:139.29px;line-height:8.9px;font-size:6.9px;color:#1e1e1e;white-space:nowrap;left:310.7px;transform:scaleX(0.97);transform-origin:0 50%;">None</div>
<div style="position:absolute;left:171.3px;top:147.255px;width:189.39999999999998px;height:10.264999999999992px;background:#c6c6c6;"></div>
<svg style="left:175.80px;top:149.16px" width="6" height="6" viewBox="-3 -3 6 6"><g fill="none" stroke="#707070" stroke-width="0.45"><path d="M0.00 -2.30L0.44 -1.06L1.63 -1.63L1.06 -0.44L2.30 0.00L1.06 0.44L1.63 1.63L0.44 1.06L0.00 2.30L-0.44 1.06L-1.63 1.63L-1.06 0.44L-2.30 0.00L-1.06 -0.44L-1.63 -1.63L-0.44 -1.06Z"/><circle r="0.80"/></g></svg>
<div style="position:absolute;top:148.96px;line-height:8.9px;font-size:6.9px;color:#1e1e1e;white-space:nowrap;left:201.79999999999998px;transform:scaleX(0.97);transform-origin:0 50%;">18</div>
<div style="position:absolute;top:148.96px;line-height:8.9px;font-size:6.9px;color:#1e1e1e;white-space:nowrap;left:236.39999999999998px;transform:scaleX(0.97);transform-origin:0 50%;">1.80mm</div>
<div style="position:absolute;top:148.96px;line-height:8.9px;font-size:6.9px;color:#1e1e1e;white-space:nowrap;left:270.9px;transform:scaleX(0.97);transform-origin:0 50%;">Non-Plated</div>
<div style="position:absolute;top:148.96px;line-height:8.9px;font-size:6.9px;color:#1e1e1e;white-space:nowrap;left:310.7px;transform:scaleX(0.97);transform-origin:0 50%;">None</div>
<div style="position:absolute;left:171.3px;top:156.92px;width:189.39999999999998px;height:10.264999999999992px;background:#dddddd;"></div>
<svg style="left:175.80px;top:158.82px" width="6" height="6" viewBox="-3 -3 6 6"><g fill="none" stroke="#707070" stroke-width="0.45"><rect x="-2.3" y="-2.3" width="4.6" height="4.6"/><path d="M-2.3 -2.3L2.3 2.3M2.3 -2.3L-2.3 2.3"/></g></svg>
<div style="position:absolute;top:158.62px;line-height:8.9px;font-size:6.9px;color:#1e1e1e;white-space:nowrap;left:201.79999999999998px;transform:scaleX(0.97);transform-origin:0 50%;">2</div>
<div style="position:absolute;top:158.62px;line-height:8.9px;font-size:6.9px;color:#1e1e1e;white-space:nowrap;left:236.39999999999998px;transform:scaleX(0.97);transform-origin:0 50%;">3.30mm</div>
<div style="position:absolute;top:158.62px;line-height:8.9px;font-size:6.9px;color:#1e1e1e;white-space:nowrap;left:270.9px;transform:scaleX(0.97);transform-origin:0 50%;">Plated</div>
<div style="position:absolute;top:158.62px;line-height:8.9px;font-size:6.9px;color:#1e1e1e;white-space:nowrap;left:310.7px;transform:scaleX(0.97);transform-origin:0 50%;">None</div>
<div style="position:absolute;left:171.3px;top:166.58499999999998px;width:189.39999999999998px;height:10.26500000000002px;background:#c6c6c6;"></div>
<svg style="left:175.80px;top:168.48px" width="6" height="6" viewBox="-3 -3 6 6"><g fill="none" stroke="#707070" stroke-width="0.45"><path d="M0 -2.3L2.3 0L0 2.3L-2.3 0Z"/></g></svg>
<div style="position:absolute;top:168.28px;line-height:8.9px;font-size:6.9px;color:#1e1e1e;white-space:nowrap;left:201.79999999999998px;transform:scaleX(0.97);transform-origin:0 50%;">4</div>
<div style="position:absolute;top:168.28px;line-height:8.9px;font-size:6.9px;color:#1e1e1e;white-space:nowrap;left:236.39999999999998px;transform:scaleX(0.97);transform-origin:0 50%;">3.40mm</div>
<div style="position:absolute;top:168.28px;line-height:8.9px;font-size:6.9px;color:#1e1e1e;white-space:nowrap;left:270.9px;transform:scaleX(0.97);transform-origin:0 50%;">Plated</div>
<div style="position:absolute;top:168.28px;line-height:8.9px;font-size:6.9px;color:#1e1e1e;white-space:nowrap;left:310.7px;transform:scaleX(0.97);transform-origin:0 50%;">None</div>
<div style="position:absolute;left:171.3px;top:176.25px;width:189.39999999999998px;height:10.250000000000005px;background:#dddddd;"></div>
<svg style="left:175.80px;top:178.15px" width="6" height="6" viewBox="-3 -3 6 6"><g fill="none" stroke="#707070" stroke-width="0.45"><rect x="-2.3" y="-2.3" width="4.6" height="4.6"/></g></svg>
<div style="position:absolute;top:177.95px;line-height:8.9px;font-size:6.9px;color:#1e1e1e;white-space:nowrap;left:201.79999999999998px;transform:scaleX(0.97);transform-origin:0 50%;">4</div>
<div style="position:absolute;top:177.95px;line-height:8.9px;font-size:6.9px;color:#1e1e1e;white-space:nowrap;left:236.39999999999998px;transform:scaleX(0.97);transform-origin:0 50%;">5.10mm</div>
<div style="position:absolute;top:177.95px;line-height:8.9px;font-size:6.9px;color:#1e1e1e;white-space:nowrap;left:270.9px;transform:scaleX(0.97);transform-origin:0 50%;">Non-Plated</div>
<div style="position:absolute;top:177.95px;line-height:8.9px;font-size:6.9px;color:#1e1e1e;white-space:nowrap;left:310.7px;transform:scaleX(0.97);transform-origin:0 50%;">None</div>
<div style="position:absolute;left:171.3px;top:185.9px;width:189.39999999999998px;height:9.199999999999994px;background:#c6c6c6;"></div>
<div style="position:absolute;top:186.55px;line-height:8.9px;font-size:6.9px;color:#1e1e1e;white-space:nowrap;left:201.79999999999998px;transform:scaleX(0.97);transform-origin:0 50%;">366 Total</div>
<div style="position:absolute;left:171.3px;top:79.6px;width:189.39999999999998px;height:0.6px;background:#808080;"></div>
<div style="position:absolute;left:171.3px;top:89.26499999999999px;width:189.39999999999998px;height:0.6px;background:#808080;"></div>
<div style="position:absolute;left:171.3px;top:98.92999999999999px;width:189.39999999999998px;height:0.6px;background:#808080;"></div>
<div style="position:absolute;left:171.3px;top:108.595px;width:189.39999999999998px;height:0.6px;background:#808080;"></div>
<div style="position:absolute;left:171.3px;top:118.25999999999999px;width:189.39999999999998px;height:0.6px;background:#808080;"></div>
<div style="position:absolute;left:171.3px;top:127.92499999999998px;width:189.39999999999998px;height:0.6px;background:#808080;"></div>
<div style="position:absolute;left:171.3px;top:137.58999999999997px;width:189.39999999999998px;height:0.6px;background:#808080;"></div>
<div style="position:absolute;left:171.3px;top:147.255px;width:189.39999999999998px;height:0.6px;background:#808080;"></div>
<div style="position:absolute;left:171.3px;top:156.92px;width:189.39999999999998px;height:0.6px;background:#808080;"></div>
<div style="position:absolute;left:171.3px;top:166.58499999999998px;width:189.39999999999998px;height:0.6px;background:#808080;"></div>
<div style="position:absolute;left:171.3px;top:176.25px;width:189.39999999999998px;height:0.6px;background:#808080;"></div>
<div style="position:absolute;left:171.3px;top:185.9px;width:189.39999999999998px;height:0.6px;background:#808080;"></div>
<div style="position:absolute;left:199.6px;top:70.6px;width:0.6px;height:123.9px;background:#858585;"></div>
<div style="position:absolute;left:234.2px;top:70.6px;width:0.6px;height:123.9px;background:#858585;"></div>
<div style="position:absolute;left:268.7px;top:70.6px;width:0.6px;height:123.9px;background:#858585;"></div>
<div style="position:absolute;left:308.5px;top:70.6px;width:0.6px;height:123.9px;background:#858585;"></div>
<div style="position:absolute;top:98.55px;line-height:10.1px;font-size:8.1px;color:#1c1c1c;white-space:nowrap;left:379.6px;transform-origin:0 50%;transform:scaleX(1.000);">Drill Drawing View (Scale 1:1)</div>
<div style="position:absolute;left:378.8px;top:108.2px;width:300px;height:179.4px;background:#fff;border:0.9px solid #23236e;"></div>
<svg style="left:0;top:0" width="800" height="479" viewBox="0 0 800 479"><g fill="none" stroke="#6a6a6a" stroke-width="0.5"><rect x="379.6" y="111.8" width="4.6" height="4.6"/><rect x="380.8" y="113.0" width="2.3" height="2.3"/><rect x="384.0" y="111.8" width="4.6" height="4.6"/><rect x="385.2" y="113.0" width="2.3" height="2.3"/><rect x="388.4" y="111.8" width="4.6" height="4.6"/><rect x="389.5" y="113.0" width="2.3" height="2.3"/><rect x="379.6" y="115.8" width="4.6" height="4.6"/><rect x="380.8" y="116.9" width="2.3" height="2.3"/><rect x="384.0" y="115.8" width="4.6" height="4.6"/><rect x="385.2" y="116.9" width="2.3" height="2.3"/><rect x="388.4" y="115.8" width="4.6" height="4.6"/><rect x="389.5" y="116.9" width="2.3" height="2.3"/><rect x="381.8" y="119.3" width="4.6" height="4.6"/><rect x="383.0" y="120.4" width="2.3" height="2.3"/><rect x="386.2" y="119.3" width="4.6" height="4.6"/><rect x="387.3" y="120.4" width="2.3" height="2.3"/><rect x="384.0" y="108.7" width="4.6" height="4.6"/><rect x="385.2" y="109.9" width="2.3" height="2.3"/><rect x="378.3" y="108.7" width="4.6" height="4.6"/><rect x="379.5" y="109.9" width="2.3" height="2.3"/><rect x="389.7" y="108.7" width="4.6" height="4.6"/><rect x="390.9" y="109.9" width="2.3" height="2.3"/><circle cx="386.3" cy="116.3" r="2.6"/><path d="M398.6 118.2L399.3 119.8L401.0 119.9L399.7 121.0L400.1 122.7L398.6 121.8L397.1 122.7L397.5 121.0L396.2 119.9L397.9 119.8Z"/><path d="M413.5 116.8L414.2 118.4L415.9 118.6L414.6 119.7L415.0 121.4L413.5 120.5L412.0 121.4L412.4 119.7L411.1 118.6L412.8 118.4Z"/><path d="M428.0 118.2L428.6 119.8L430.4 119.9L429.0 121.0L429.4 122.7L428.0 121.8L426.5 122.7L426.9 121.0L425.5 119.9L427.3 119.8Z"/><path d="M438.0 118.2L438.7 119.8L440.4 119.9L439.1 121.0L439.5 122.7L438.0 121.8L436.5 122.7L436.9 121.0L435.6 119.9L437.4 119.8Z"/><path d="M452.1 116.8L452.7 118.4L454.5 118.6L453.2 119.7L453.6 121.4L452.1 120.5L450.6 121.4L451.0 119.7L449.7 118.6L451.4 118.4Z"/><path d="M467.4 118.2L468.1 119.8L469.8 119.9L468.5 121.0L468.9 122.7L467.4 121.8L465.9 122.7L466.3 121.0L465.0 119.9L466.7 119.8Z"/><path d="M477.5 109.4L477.9 110.9L479.3 110.1L478.6 111.5L480.0 111.9L478.6 112.4L479.3 113.7L477.9 113.0L477.5 114.5L477.1 113.0L475.7 113.7L476.4 112.4L475.0 111.9L476.4 111.5L475.7 110.1L477.1 110.9Z"/><path d="M491.5 109.4L492.0 110.9L493.3 110.1L492.6 111.5L494.1 111.9L492.6 112.4L493.3 113.7L492.0 113.0L491.5 114.5L491.1 113.0L489.7 113.7L490.5 112.4L489.0 111.9L490.5 111.5L489.7 110.1L491.1 110.9Z"/><path d="M508.2 109.4L508.6 110.9L510.0 110.1L509.2 111.5L510.7 111.9L509.2 112.4L510.0 113.7L508.6 113.0L508.2 114.5L507.7 113.0L506.4 113.7L507.1 112.4L505.7 111.9L507.1 111.5L506.4 110.1L507.7 110.9Z"/><path d="M522.2 109.4L522.6 110.9L524.0 110.1L523.3 111.5L524.7 111.9L523.3 112.4L524.0 113.7L522.6 113.0L522.2 114.5L521.8 113.0L520.4 113.7L521.1 112.4L519.7 111.9L521.1 111.5L520.4 110.1L521.8 110.9Z"/><path d="M538.9 109.4L539.3 110.9L540.7 110.1L539.9 111.5L541.4 111.9L539.9 112.4L540.7 113.7L539.3 113.0L538.9 114.5L538.4 113.0L537.1 113.7L537.8 112.4L536.3 111.9L537.8 111.5L537.1 110.1L538.4 110.9Z"/><path d="M553.8 109.4L554.2 110.9L555.6 110.1L554.8 111.5L556.3 111.9L554.8 112.4L555.6 113.7L554.2 113.0L553.8 114.5L553.3 113.0L552.0 113.7L552.7 112.4L551.2 111.9L552.7 111.5L552.0 110.1L553.3 110.9Z"/><path d="M477.5 118.2L478.2 119.8L479.9 119.9L478.6 121.0L479.0 122.7L477.5 121.8L476.0 122.7L476.4 121.0L475.1 119.9L476.8 119.8Z"/><path d="M484.9 117.3L485.6 118.9L487.4 119.0L486.0 120.2L486.4 121.9L484.9 121.0L483.5 121.9L483.9 120.2L482.5 119.0L484.3 118.9Z"/><path d="M491.5 118.2L492.2 119.8L493.9 119.9L492.6 121.0L493.0 122.7L491.5 121.8L490.0 122.7L490.4 121.0L489.1 119.9L490.8 119.8Z"/><path d="M508.2 118.2L508.9 119.8L510.6 119.9L509.3 121.0L509.7 122.7L508.2 121.8L506.7 122.7L507.1 121.0L505.8 119.9L507.5 119.8Z"/><path d="M515.6 117.3L516.3 118.9L518.0 119.0L516.7 120.2L517.1 121.9L515.6 121.0L514.1 121.9L514.5 120.2L513.2 119.0L515.0 118.9Z"/><path d="M523.1 118.2L523.8 119.8L525.5 119.9L524.2 121.0L524.6 122.7L523.1 121.8L521.6 122.7L522.0 121.0L520.7 119.9L522.4 119.8Z"/><path d="M538.9 118.2L539.5 119.8L541.3 119.9L540.0 121.0L540.4 122.7L538.9 121.8L537.4 122.7L537.8 121.0L536.5 119.9L538.2 119.8Z"/><path d="M546.3 117.3L547.0 118.9L548.7 119.0L547.4 120.2L547.8 121.9L546.3 121.0L544.8 121.9L545.2 120.2L543.9 119.0L545.6 118.9Z"/><path d="M553.8 118.2L554.5 119.8L556.2 119.9L554.9 121.0L555.3 122.7L553.8 121.8L552.3 122.7L552.7 121.0L551.4 119.9L553.1 119.8Z"/><rect x="479.9" y="121.4" width="4.8" height="4.8"/><rect x="481.1" y="122.6" width="2.4" height="2.4"/><rect x="483.4" y="121.4" width="4.8" height="4.8"/><rect x="484.6" y="122.6" width="2.4" height="2.4"/><rect x="510.6" y="121.4" width="4.8" height="4.8"/><rect x="511.8" y="122.6" width="2.4" height="2.4"/><rect x="514.1" y="121.4" width="4.8" height="4.8"/><rect x="515.3" y="122.6" width="2.4" height="2.4"/><rect x="542.2" y="121.4" width="4.8" height="4.8"/><rect x="543.4" y="122.6" width="2.4" height="2.4"/><rect x="545.7" y="121.4" width="4.8" height="4.8"/><rect x="546.9" y="122.6" width="2.4" height="2.4"/><path d="M406.0 125.1L408.2 129.0L403.8 129.0Z"/><path d="M420.5 125.1L422.7 129.0L418.3 129.0Z"/><path d="M444.6 125.1L446.8 129.0L442.4 129.0Z"/><path d="M460.0 125.1L462.2 129.0L457.8 129.0Z"/><path d="M406.0 130.3L408.2 134.3L403.8 134.3Z"/><path d="M420.5 130.3L422.7 134.3L418.3 134.3Z"/><path d="M444.6 130.3L446.8 134.3L442.4 134.3Z"/><path d="M460.0 130.3L462.2 134.3L457.8 134.3Z"/><path d="M473.1 126.9L473.8 128.5L475.5 128.7L474.2 129.8L474.6 131.5L473.1 130.6L471.6 131.5L472.0 129.8L470.7 128.7L472.4 128.5Z"/><path d="M477.5 131.3L478.2 132.9L479.9 133.1L478.6 134.2L479.0 135.9L477.5 135.0L476.0 135.9L476.4 134.2L475.1 133.1L476.8 132.9Z"/><path d="M484.1 132.6L484.7 134.2L486.5 134.4L485.2 135.5L485.6 137.2L484.1 136.3L482.6 137.2L483.0 135.5L481.7 134.4L483.4 134.2Z"/><path d="M491.5 131.3L492.2 132.9L493.9 133.1L492.6 134.2L493.0 135.9L491.5 135.0L490.0 135.9L490.4 134.2L489.1 133.1L490.8 132.9Z"/><path d="M495.9 126.9L496.6 128.5L498.3 128.7L497.0 129.8L497.4 131.5L495.9 130.6L494.4 131.5L494.8 129.8L493.5 128.7L495.2 128.5Z"/><path d="M503.8 126.9L504.5 128.5L506.2 128.7L504.9 129.8L505.3 131.5L503.8 130.6L502.3 131.5L502.7 129.8L501.4 128.7L503.1 128.5Z"/><path d="M508.2 131.3L508.9 132.9L510.6 133.1L509.3 134.2L509.7 135.9L508.2 135.0L506.7 135.9L507.1 134.2L505.8 133.1L507.5 132.9Z"/><path d="M515.6 132.6L516.3 134.2L518.0 134.4L516.7 135.5L517.1 137.2L515.6 136.3L514.1 137.2L514.5 135.5L513.2 134.4L515.0 134.2Z"/><path d="M523.1 131.3L523.8 132.9L525.5 133.1L524.2 134.2L524.6 135.9L523.1 135.0L521.6 135.9L522.0 134.2L520.7 133.1L522.4 132.9Z"/><path d="M527.5 126.9L528.1 128.5L529.9 128.7L528.6 129.8L529.0 131.5L527.5 130.6L526.0 131.5L526.4 129.8L525.1 128.7L526.8 128.5Z"/><path d="M535.4 126.9L536.0 128.5L537.8 128.7L536.5 129.8L536.8 131.5L535.4 130.6L533.9 131.5L534.3 129.8L533.0 128.7L534.7 128.5Z"/><path d="M538.9 131.3L539.5 132.9L541.3 133.1L540.0 134.2L540.4 135.9L538.9 135.0L537.4 135.9L537.8 134.2L536.5 133.1L538.2 132.9Z"/><path d="M546.3 132.6L547.0 134.2L548.7 134.4L547.4 135.5L547.8 137.2L546.3 136.3L544.8 137.2L545.2 135.5L543.9 134.4L545.6 134.2Z"/><path d="M553.8 131.3L554.5 132.9L556.2 133.1L554.9 134.2L555.3 135.9L553.8 135.0L552.3 135.9L552.7 134.2L551.4 133.1L553.1 132.9Z"/><path d="M558.2 126.9L558.8 128.5L560.6 128.7L559.3 129.8L559.6 131.5L558.2 130.6L556.7 131.5L557.1 129.8L555.8 128.7L557.5 128.5Z"/><rect x="447.6" y="138.1" width="4.6" height="4.6"/><rect x="448.7" y="139.3" width="2.3" height="2.3"/><rect x="454.1" y="138.1" width="4.6" height="4.6"/><rect x="455.3" y="139.3" width="2.3" height="2.3"/><rect x="464.2" y="139.0" width="4.6" height="4.6"/><rect x="465.4" y="140.1" width="2.3" height="2.3"/><rect x="478.3" y="137.2" width="4.6" height="4.6"/><rect x="479.4" y="138.4" width="2.3" height="2.3"/><circle cx="592.4" cy="128.6" r="2.6"/><circle cx="597.6" cy="128.6" r="2.6"/><circle cx="602.9" cy="128.6" r="2.6"/><circle cx="590.2" cy="133.0" r="2.6"/><circle cx="595.4" cy="133.0" r="2.6"/><circle cx="600.7" cy="133.0" r="2.6"/><circle cx="605.5" cy="133.0" r="2.6"/><circle cx="592.4" cy="138.2" r="2.6"/><circle cx="597.6" cy="138.2" r="2.6"/><circle cx="602.9" cy="138.2" r="2.6"/><rect x="573.8" y="131.5" width="4.6" height="4.6"/><rect x="575.0" y="132.7" width="2.3" height="2.3"/><rect x="561.6" y="142.5" width="4.6" height="4.6"/><rect x="562.7" y="143.7" width="2.3" height="2.3"/><rect x="566.8" y="142.5" width="4.6" height="4.6"/><rect x="568.0" y="143.7" width="2.3" height="2.3"/><rect x="572.1" y="142.5" width="4.6" height="4.6"/><rect x="573.2" y="143.7" width="2.3" height="2.3"/><rect x="576.9" y="142.5" width="4.6" height="4.6"/><rect x="578.1" y="143.7" width="2.3" height="2.3"/><rect x="582.2" y="142.5" width="4.6" height="4.6"/><rect x="583.3" y="143.7" width="2.3" height="2.3"/><rect x="586.5" y="142.5" width="4.6" height="4.6"/><rect x="587.7" y="143.7" width="2.3" height="2.3"/><rect x="389.3" y="149.1" width="4.6" height="4.6"/><rect x="390.4" y="150.2" width="2.3" height="2.3"/><rect x="384.9" y="152.6" width="4.6" height="4.6"/><rect x="386.0" y="153.7" width="2.3" height="2.3"/><rect x="399.3" y="157.8" width="4.6" height="4.6"/><rect x="400.5" y="159.0" width="2.3" height="2.3"/><rect x="410.3" y="152.6" width="4.6" height="4.6"/><rect x="411.5" y="153.7" width="2.3" height="2.3"/><rect x="414.7" y="152.6" width="4.6" height="4.6"/><rect x="415.8" y="153.7" width="2.3" height="2.3"/><rect x="425.7" y="160.0" width="4.6" height="4.6"/><rect x="426.8" y="161.2" width="2.3" height="2.3"/><rect x="425.7" y="164.4" width="4.6" height="4.6"/><rect x="426.8" y="165.6" width="2.3" height="2.3"/><rect x="386.2" y="168.8" width="4.6" height="4.6"/><rect x="387.3" y="170.0" width="2.3" height="2.3"/><rect x="386.2" y="174.1" width="4.6" height="4.6"/><rect x="387.3" y="175.2" width="2.3" height="2.3"/><rect x="495.8" y="152.1" width="4.6" height="4.6"/><rect x="496.9" y="153.3" width="2.3" height="2.3"/><rect x="526.5" y="155.7" width="4.6" height="4.6"/><rect x="527.6" y="156.8" width="2.3" height="2.3"/><rect x="538.3" y="152.1" width="4.6" height="4.6"/><rect x="539.5" y="153.3" width="2.3" height="2.3"/><rect x="575.6" y="149.1" width="4.6" height="4.6"/><rect x="576.7" y="150.2" width="2.3" height="2.3"/><rect x="583.5" y="149.1" width="4.6" height="4.6"/><rect x="584.6" y="150.2" width="2.3" height="2.3"/><rect x="575.6" y="160.9" width="4.6" height="4.6"/><rect x="576.7" y="162.1" width="2.3" height="2.3"/><rect x="585.7" y="161.4" width="4.6" height="4.6"/><rect x="586.8" y="162.5" width="2.3" height="2.3"/><rect x="592.7" y="168.8" width="4.6" height="4.6"/><rect x="593.8" y="170.0" width="2.3" height="2.3"/><rect x="597.1" y="168.8" width="4.6" height="4.6"/><rect x="598.2" y="170.0" width="2.3" height="2.3"/><rect x="601.5" y="168.8" width="4.6" height="4.6"/><rect x="602.6" y="170.0" width="2.3" height="2.3"/><rect x="594.9" y="172.3" width="4.6" height="4.6"/><rect x="596.0" y="173.5" width="2.3" height="2.3"/><rect x="599.3" y="172.3" width="4.6" height="4.6"/><rect x="600.4" y="173.5" width="2.3" height="2.3"/><rect x="592.7" y="155.7" width="4.6" height="4.6"/><rect x="593.8" y="156.8" width="2.3" height="2.3"/><rect x="597.1" y="155.7" width="4.6" height="4.6"/><rect x="598.2" y="156.8" width="2.3" height="2.3"/><rect x="601.5" y="155.7" width="4.6" height="4.6"/><rect x="602.6" y="156.8" width="2.3" height="2.3"/><rect x="594.9" y="160.0" width="4.6" height="4.6"/><rect x="596.0" y="161.2" width="2.3" height="2.3"/><rect x="599.3" y="160.0" width="4.6" height="4.6"/><rect x="600.4" y="161.2" width="2.3" height="2.3"/><rect x="592.2" y="153.5" width="4.6" height="4.6"/><rect x="593.4" y="154.6" width="2.3" height="2.3"/><rect x="596.6" y="153.5" width="4.6" height="4.6"/><rect x="597.8" y="154.6" width="2.3" height="2.3"/><rect x="601.0" y="153.5" width="4.6" height="4.6"/><rect x="602.2" y="154.6" width="2.3" height="2.3"/><rect x="594.4" y="157.8" width="4.6" height="4.6"/><rect x="595.6" y="159.0" width="2.3" height="2.3"/><rect x="598.8" y="157.8" width="4.6" height="4.6"/><rect x="600.0" y="159.0" width="2.3" height="2.3"/><rect x="603.2" y="157.8" width="4.6" height="4.6"/><rect x="604.4" y="159.0" width="2.3" height="2.3"/><rect x="590.1" y="157.0" width="4.6" height="4.6"/><rect x="591.2" y="158.1" width="2.3" height="2.3"/><rect x="594.4" y="166.6" width="4.6" height="4.6"/><rect x="595.6" y="167.8" width="2.3" height="2.3"/><rect x="598.8" y="166.6" width="4.6" height="4.6"/><rect x="600.0" y="167.8" width="2.3" height="2.3"/><rect x="603.2" y="166.6" width="4.6" height="4.6"/><rect x="604.4" y="167.8" width="2.3" height="2.3"/><rect x="596.6" y="171.0" width="4.6" height="4.6"/><rect x="597.8" y="172.1" width="2.3" height="2.3"/><rect x="601.0" y="171.0" width="4.6" height="4.6"/><rect x="602.2" y="172.1" width="2.3" height="2.3"/><rect x="594.4" y="174.5" width="4.6" height="4.6"/><rect x="595.6" y="175.7" width="2.3" height="2.3"/><rect x="598.8" y="174.5" width="4.6" height="4.6"/><rect x="600.0" y="175.7" width="2.3" height="2.3"/><rect x="603.2" y="173.2" width="4.6" height="4.6"/><rect x="604.4" y="174.3" width="2.3" height="2.3"/><rect x="467.3" y="173.2" width="4.6" height="4.6"/><rect x="468.5" y="174.3" width="2.3" height="2.3"/><rect x="472.6" y="172.3" width="4.6" height="4.6"/><rect x="473.7" y="173.5" width="2.3" height="2.3"/><rect x="478.3" y="171.0" width="4.6" height="4.6"/><rect x="479.4" y="172.1" width="2.3" height="2.3"/><rect x="484.8" y="171.0" width="4.6" height="4.6"/><rect x="486.0" y="172.1" width="2.3" height="2.3"/><rect x="489.2" y="171.0" width="4.6" height="4.6"/><rect x="490.4" y="172.1" width="2.3" height="2.3"/><rect x="495.8" y="166.6" width="4.6" height="4.6"/><rect x="496.9" y="167.8" width="2.3" height="2.3"/><rect x="500.2" y="163.1" width="4.6" height="4.6"/><rect x="501.3" y="164.3" width="2.3" height="2.3"/><rect x="504.6" y="160.0" width="4.6" height="4.6"/><rect x="505.7" y="161.2" width="2.3" height="2.3"/><rect x="508.9" y="157.0" width="4.6" height="4.6"/><rect x="510.1" y="158.1" width="2.3" height="2.3"/><rect x="513.3" y="154.3" width="4.6" height="4.6"/><rect x="514.5" y="155.5" width="2.3" height="2.3"/><rect x="517.7" y="154.3" width="4.6" height="4.6"/><rect x="518.9" y="155.5" width="2.3" height="2.3"/><rect x="506.8" y="164.4" width="4.6" height="4.6"/><rect x="507.9" y="165.6" width="2.3" height="2.3"/><rect x="511.1" y="168.8" width="4.6" height="4.6"/><rect x="512.3" y="170.0" width="2.3" height="2.3"/><rect x="502.4" y="167.5" width="4.6" height="4.6"/><rect x="503.5" y="168.6" width="2.3" height="2.3"/><rect x="522.1" y="157.8" width="4.6" height="4.6"/><rect x="523.3" y="159.0" width="2.3" height="2.3"/><rect x="526.5" y="162.2" width="4.6" height="4.6"/><rect x="527.6" y="163.4" width="2.3" height="2.3"/><rect x="530.0" y="166.6" width="4.6" height="4.6"/><rect x="531.1" y="167.8" width="2.3" height="2.3"/><rect x="533.1" y="171.0" width="4.6" height="4.6"/><rect x="534.2" y="172.1" width="2.3" height="2.3"/><rect x="537.4" y="173.2" width="4.6" height="4.6"/><rect x="538.6" y="174.3" width="2.3" height="2.3"/><rect x="520.8" y="164.4" width="4.6" height="4.6"/><rect x="521.9" y="165.6" width="2.3" height="2.3"/><rect x="530.9" y="160.0" width="4.6" height="4.6"/><rect x="532.0" y="161.2" width="2.3" height="2.3"/><rect x="550.6" y="160.0" width="4.6" height="4.6"/><rect x="551.7" y="161.2" width="2.3" height="2.3"/><rect x="557.2" y="160.0" width="4.6" height="4.6"/><rect x="558.3" y="161.2" width="2.3" height="2.3"/><rect x="550.6" y="168.8" width="4.6" height="4.6"/><rect x="551.7" y="170.0" width="2.3" height="2.3"/><rect x="567.3" y="173.2" width="4.6" height="4.6"/><rect x="568.4" y="174.3" width="2.3" height="2.3"/><rect x="545.3" y="177.6" width="4.6" height="4.6"/><rect x="546.5" y="178.7" width="2.3" height="2.3"/><rect x="467.3" y="179.8" width="4.6" height="4.6"/><rect x="468.5" y="180.9" width="2.3" height="2.3"/><rect x="470.8" y="180.6" width="4.6" height="4.6"/><rect x="472.0" y="181.8" width="2.3" height="2.3"/><rect x="454.1" y="185.0" width="4.6" height="4.6"/><rect x="455.3" y="186.2" width="2.3" height="2.3"/><rect x="482.6" y="185.0" width="4.6" height="4.6"/><rect x="483.8" y="186.2" width="2.3" height="2.3"/><rect x="513.3" y="181.1" width="4.6" height="4.6"/><rect x="514.5" y="182.2" width="2.3" height="2.3"/><rect x="517.7" y="184.1" width="4.6" height="4.6"/><rect x="518.9" y="185.3" width="2.3" height="2.3"/><rect x="522.1" y="185.0" width="4.6" height="4.6"/><rect x="523.3" y="186.2" width="2.3" height="2.3"/><rect x="539.6" y="177.6" width="4.6" height="4.6"/><rect x="540.8" y="178.7" width="2.3" height="2.3"/><rect x="547.1" y="179.8" width="4.6" height="4.6"/><rect x="548.2" y="180.9" width="2.3" height="2.3"/><rect x="541.8" y="183.3" width="4.6" height="4.6"/><rect x="543.0" y="184.4" width="2.3" height="2.3"/><rect x="457.7" y="191.6" width="4.6" height="4.6"/><rect x="458.8" y="192.8" width="2.3" height="2.3"/><rect x="463.8" y="191.6" width="4.6" height="4.6"/><rect x="464.9" y="192.8" width="2.3" height="2.3"/><rect x="509.8" y="194.2" width="4.6" height="4.6"/><rect x="511.0" y="195.4" width="2.3" height="2.3"/><rect x="534.4" y="187.7" width="4.6" height="4.6"/><rect x="535.5" y="188.8" width="2.3" height="2.3"/><rect x="537.4" y="191.6" width="4.6" height="4.6"/><rect x="538.6" y="192.8" width="2.3" height="2.3"/><rect x="548.4" y="191.6" width="4.6" height="4.6"/><rect x="549.6" y="192.8" width="2.3" height="2.3"/><rect x="544.0" y="195.1" width="4.6" height="4.6"/><rect x="545.2" y="196.3" width="2.3" height="2.3"/><rect x="547.5" y="195.1" width="4.6" height="4.6"/><rect x="548.7" y="196.3" width="2.3" height="2.3"/><rect x="555.9" y="194.2" width="4.6" height="4.6"/><rect x="557.0" y="195.4" width="2.3" height="2.3"/><rect x="565.9" y="194.2" width="4.6" height="4.6"/><rect x="567.1" y="195.4" width="2.3" height="2.3"/><rect x="574.7" y="192.9" width="4.6" height="4.6"/><rect x="575.9" y="194.1" width="2.3" height="2.3"/><rect x="583.5" y="196.0" width="4.6" height="4.6"/><rect x="584.6" y="197.1" width="2.3" height="2.3"/><rect x="594.4" y="182.8" width="4.6" height="4.6"/><rect x="595.6" y="184.0" width="2.3" height="2.3"/><rect x="580.4" y="197.3" width="4.6" height="4.6"/><rect x="581.6" y="198.5" width="2.3" height="2.3"/><rect x="584.8" y="197.3" width="4.6" height="4.6"/><rect x="585.9" y="198.5" width="2.3" height="2.3"/><rect x="409.4" y="197.3" width="4.6" height="4.6"/><rect x="410.6" y="198.5" width="2.3" height="2.3"/><rect x="428.7" y="197.3" width="4.6" height="4.6"/><rect x="429.9" y="198.5" width="2.3" height="2.3"/><rect x="437.5" y="209.6" width="4.6" height="4.6"/><rect x="438.6" y="210.7" width="2.3" height="2.3"/><rect x="460.7" y="210.5" width="4.6" height="4.6"/><rect x="461.9" y="211.6" width="2.3" height="2.3"/><rect x="542.7" y="199.5" width="4.6" height="4.6"/><rect x="543.9" y="200.6" width="2.3" height="2.3"/><rect x="557.2" y="199.5" width="4.6" height="4.6"/><rect x="558.3" y="200.6" width="2.3" height="2.3"/><rect x="563.7" y="199.5" width="4.6" height="4.6"/><rect x="564.9" y="200.6" width="2.3" height="2.3"/><rect x="563.7" y="203.9" width="4.6" height="4.6"/><rect x="564.9" y="205.0" width="2.3" height="2.3"/><rect x="544.0" y="206.1" width="4.6" height="4.6"/><rect x="545.2" y="207.2" width="2.3" height="2.3"/><rect x="574.7" y="208.3" width="4.6" height="4.6"/><rect x="575.9" y="209.4" width="2.3" height="2.3"/><rect x="554.1" y="203.9" width="4.6" height="4.6"/><rect x="555.3" y="205.0" width="2.3" height="2.3"/><rect x="558.5" y="206.1" width="4.6" height="4.6"/><rect x="559.6" y="207.2" width="2.3" height="2.3"/><rect x="488.3" y="214.8" width="4.6" height="4.6"/><rect x="489.5" y="216.0" width="2.3" height="2.3"/><rect x="495.8" y="214.8" width="4.6" height="4.6"/><rect x="496.9" y="216.0" width="2.3" height="2.3"/><rect x="516.4" y="219.2" width="4.6" height="4.6"/><rect x="517.6" y="220.4" width="2.3" height="2.3"/><rect x="537.4" y="217.0" width="4.6" height="4.6"/><rect x="538.6" y="218.2" width="2.3" height="2.3"/><rect x="541.8" y="217.9" width="4.6" height="4.6"/><rect x="543.0" y="219.1" width="2.3" height="2.3"/><rect x="550.6" y="212.6" width="4.6" height="4.6"/><rect x="551.7" y="213.8" width="2.3" height="2.3"/><rect x="555.0" y="212.6" width="4.6" height="4.6"/><rect x="556.1" y="213.8" width="2.3" height="2.3"/><rect x="559.4" y="211.8" width="4.6" height="4.6"/><rect x="560.5" y="212.9" width="2.3" height="2.3"/><rect x="541.8" y="219.2" width="4.6" height="4.6"/><rect x="543.0" y="220.4" width="2.3" height="2.3"/><rect x="546.2" y="223.6" width="4.6" height="4.6"/><rect x="547.4" y="224.8" width="2.3" height="2.3"/><rect x="550.6" y="224.9" width="4.6" height="4.6"/><rect x="551.7" y="226.1" width="2.3" height="2.3"/><rect x="555.0" y="224.9" width="4.6" height="4.6"/><rect x="556.1" y="226.1" width="2.3" height="2.3"/><rect x="559.4" y="223.6" width="4.6" height="4.6"/><rect x="560.5" y="224.8" width="2.3" height="2.3"/><rect x="563.7" y="221.4" width="4.6" height="4.6"/><rect x="564.9" y="222.6" width="2.3" height="2.3"/><rect x="567.3" y="218.3" width="4.6" height="4.6"/><rect x="568.4" y="219.5" width="2.3" height="2.3"/><rect x="585.7" y="220.1" width="4.6" height="4.6"/><rect x="586.8" y="221.2" width="2.3" height="2.3"/><rect x="572.5" y="223.6" width="4.6" height="4.6"/><rect x="573.7" y="224.8" width="2.3" height="2.3"/><circle cx="417.0" cy="218.5" r="2.4"/><circle cx="417.0" cy="223.7" r="2.4"/><circle cx="417.0" cy="229.0" r="2.4"/><rect x="457.7" y="221.4" width="4.6" height="4.6"/><rect x="458.8" y="222.6" width="2.3" height="2.3"/><rect x="457.7" y="228.9" width="4.6" height="4.6"/><rect x="458.8" y="230.0" width="2.3" height="2.3"/><rect x="511.1" y="225.8" width="4.6" height="4.6"/><rect x="512.3" y="226.9" width="2.3" height="2.3"/><rect x="516.4" y="225.8" width="4.6" height="4.6"/><rect x="517.6" y="226.9" width="2.3" height="2.3"/><rect x="508.9" y="233.3" width="4.6" height="4.6"/><rect x="510.1" y="234.4" width="2.3" height="2.3"/><rect x="513.3" y="234.6" width="4.6" height="4.6"/><rect x="514.5" y="235.7" width="2.3" height="2.3"/><rect x="516.4" y="230.2" width="4.6" height="4.6"/><rect x="517.6" y="231.3" width="2.3" height="2.3"/><rect x="498.0" y="238.9" width="4.6" height="4.6"/><rect x="499.1" y="240.1" width="2.3" height="2.3"/><rect x="508.9" y="239.8" width="4.6" height="4.6"/><rect x="510.1" y="241.0" width="2.3" height="2.3"/><rect x="520.8" y="240.7" width="4.6" height="4.6"/><rect x="521.9" y="241.9" width="2.3" height="2.3"/><rect x="559.4" y="238.9" width="4.6" height="4.6"/><rect x="560.5" y="240.1" width="2.3" height="2.3"/><circle cx="502.5" cy="248.7" r="1.6"/><circle cx="506.4" cy="248.7" r="1.6"/><rect x="441.4" y="246.0" width="4.6" height="4.6"/><rect x="442.6" y="247.1" width="2.3" height="2.3"/><rect x="441.4" y="249.9" width="4.6" height="4.6"/><rect x="442.6" y="251.1" width="2.3" height="2.3"/><rect x="441.4" y="253.9" width="4.6" height="4.6"/><rect x="442.6" y="255.0" width="2.3" height="2.3"/><rect x="445.4" y="246.0" width="4.6" height="4.6"/><rect x="446.5" y="247.1" width="2.3" height="2.3"/><rect x="445.4" y="249.9" width="4.6" height="4.6"/><rect x="446.5" y="251.1" width="2.3" height="2.3"/><rect x="445.4" y="253.9" width="4.6" height="4.6"/><rect x="446.5" y="255.0" width="2.3" height="2.3"/><rect x="449.3" y="246.0" width="4.6" height="4.6"/><rect x="450.5" y="247.1" width="2.3" height="2.3"/><rect x="449.3" y="249.9" width="4.6" height="4.6"/><rect x="450.5" y="251.1" width="2.3" height="2.3"/><rect x="449.3" y="253.9" width="4.6" height="4.6"/><rect x="450.5" y="255.0" width="2.3" height="2.3"/><circle cx="440.7" cy="252.2" r="1.5"/><circle cx="454.7" cy="252.2" r="1.5"/><circle cx="447.7" cy="245.2" r="1.5"/><circle cx="447.7" cy="259.2" r="1.5"/><circle cx="442.4" cy="246.9" r="1.5"/><circle cx="452.9" cy="246.9" r="1.5"/><circle cx="442.4" cy="257.5" r="1.5"/><circle cx="452.9" cy="257.5" r="1.5"/><rect x="578.7" y="246.0" width="4.6" height="4.6"/><rect x="579.8" y="247.1" width="2.3" height="2.3"/><rect x="578.7" y="249.9" width="4.6" height="4.6"/><rect x="579.8" y="251.1" width="2.3" height="2.3"/><rect x="578.7" y="253.9" width="4.6" height="4.6"/><rect x="579.8" y="255.0" width="2.3" height="2.3"/><rect x="582.6" y="246.0" width="4.6" height="4.6"/><rect x="583.8" y="247.1" width="2.3" height="2.3"/><rect x="582.6" y="249.9" width="4.6" height="4.6"/><rect x="583.8" y="251.1" width="2.3" height="2.3"/><rect x="582.6" y="253.9" width="4.6" height="4.6"/><rect x="583.8" y="255.0" width="2.3" height="2.3"/><rect x="586.5" y="246.0" width="4.6" height="4.6"/><rect x="587.7" y="247.1" width="2.3" height="2.3"/><rect x="586.5" y="249.9" width="4.6" height="4.6"/><rect x="587.7" y="251.1" width="2.3" height="2.3"/><rect x="586.5" y="253.9" width="4.6" height="4.6"/><rect x="587.7" y="255.0" width="2.3" height="2.3"/><circle cx="577.9" cy="252.2" r="1.5"/><circle cx="591.9" cy="252.2" r="1.5"/><circle cx="584.9" cy="245.2" r="1.5"/><circle cx="584.9" cy="259.2" r="1.5"/><circle cx="579.6" cy="246.9" r="1.5"/><circle cx="590.2" cy="246.9" r="1.5"/><circle cx="579.6" cy="257.5" r="1.5"/><circle cx="590.2" cy="257.5" r="1.5"/><rect x="569.0" y="236.8" width="4.6" height="4.6"/><rect x="570.2" y="237.9" width="2.3" height="2.3"/><rect x="574.7" y="234.6" width="4.6" height="4.6"/><rect x="575.9" y="235.7" width="2.3" height="2.3"/><rect x="579.1" y="232.4" width="4.6" height="4.6"/><rect x="580.2" y="233.5" width="2.3" height="2.3"/><rect x="583.5" y="234.6" width="4.6" height="4.6"/><rect x="584.6" y="235.7" width="2.3" height="2.3"/><rect x="587.9" y="238.9" width="4.6" height="4.6"/><rect x="589.0" y="240.1" width="2.3" height="2.3"/><rect x="592.2" y="242.0" width="4.6" height="4.6"/><rect x="593.4" y="243.2" width="2.3" height="2.3"/><rect x="559.4" y="246.4" width="4.6" height="4.6"/><rect x="560.5" y="247.6" width="2.3" height="2.3"/><rect x="559.4" y="252.1" width="4.6" height="4.6"/><rect x="560.5" y="253.3" width="2.3" height="2.3"/><rect x="594.4" y="247.7" width="4.6" height="4.6"/><rect x="595.6" y="248.9" width="2.3" height="2.3"/><rect x="387.2" y="271.5" width="5.2" height="5.2"/><rect x="502.1" y="271.5" width="5.2" height="5.2"/><rect x="524.0" y="271.5" width="5.2" height="5.2"/><path d="M527.9 263.2L530.1 265.4L527.9 267.6L525.7 265.4Z"/><path d="M526.6 280.7L528.8 282.9L526.6 285.1L524.4 282.9Z"/><rect x="539.9" y="282.2" width="4" height="4"/><rect x="540.9" y="283.2" width="2" height="2"/><rect x="543.0" y="282.2" width="4" height="4"/><rect x="544.0" y="283.2" width="2" height="2"/><rect x="560.6" y="282.0" width="1.2" height="4.4"/><rect x="562.2" y="282.0" width="1.2" height="4.4"/><rect x="563.8" y="282.0" width="1.2" height="4.4"/><rect x="565.4" y="282.0" width="1.2" height="4.4"/><rect x="566.9" y="282.0" width="1.2" height="4.4"/><rect x="568.5" y="282.0" width="1.2" height="4.4"/><rect x="570.1" y="282.0" width="1.2" height="4.4"/><rect x="571.7" y="282.0" width="1.2" height="4.4"/><rect x="573.3" y="282.0" width="1.2" height="4.4"/><rect x="574.8" y="282.0" width="1.2" height="4.4"/><rect x="576.4" y="282.0" width="1.2" height="4.4"/><rect x="578.0" y="282.0" width="1.2" height="4.4"/><rect x="579.6" y="282.0" width="1.2" height="4.4"/><rect x="581.1" y="282.0" width="1.2" height="4.4"/><rect x="582.7" y="282.0" width="1.2" height="4.4"/><rect x="584.3" y="282.0" width="1.2" height="4.4"/><rect x="585.9" y="282.0" width="1.2" height="4.4"/><rect x="587.5" y="282.0" width="1.2" height="4.4"/><rect x="589.0" y="282.0" width="1.2" height="4.4"/><rect x="590.6" y="282.0" width="1.2" height="4.4"/><rect x="592.2" y="282.0" width="1.2" height="4.4"/><rect x="593.8" y="282.0" width="1.2" height="4.4"/><rect x="595.3" y="282.0" width="1.2" height="4.4"/><rect x="596.9" y="282.0" width="1.2" height="4.4"/><rect x="598.5" y="282.0" width="1.2" height="4.4"/><rect x="600.1" y="282.0" width="1.2" height="4.4"/><rect x="601.7" y="282.0" width="1.2" height="4.4"/><rect x="603.2" y="282.0" width="1.2" height="4.4"/><rect x="604.8" y="282.0" width="1.2" height="4.4"/><rect x="606.4" y="282.0" width="1.2" height="4.4"/><rect x="608.0" y="282.0" width="1.2" height="4.4"/></g></svg>
<div style="position:absolute;top:312.88px;line-height:10.05px;font-size:8.05px;color:#1c1c1c;white-space:nowrap;left:171.3px;transform-origin:0 50%;transform:scaleX(0.999);">Layer Stack Legend</div>
<svg style="left:0;top:0" width="800" height="479" viewBox="0 0 800 479"><defs><pattern id="hx1" width="2" height="2" patternUnits="userSpaceOnUse"><path d="M0 2L2 0M-0.5 0.5L0.5 -0.5M1.5 2.5L2.5 1.5" stroke="#7a4a0c" stroke-width="0.45" opacity="0.55"/></pattern><pattern id="hx2" width="2" height="2" patternUnits="userSpaceOnUse"><path d="M0 2L2 0M-0.5 0.5L0.5 -0.5M1.5 2.5L2.5 1.5M0 0L2 2" stroke="#6a3c08" stroke-width="0.5" opacity="0.7"/></pattern></defs><rect x="171.3" y="354.1" width="76.6" height="4.7" fill="#8c3b3b" stroke="#5a2020" stroke-width="0.6"/><rect x="171.3" y="361.8" width="76.6" height="4.9" fill="#f01414" stroke="#a01010" stroke-width="0.6"/><rect x="171.3" y="369.2" width="76.6" height="4.9" fill="#0b7d20" stroke="#075014" stroke-width="0.6"/><rect x="171.3" y="377.2" width="76.6" height="4.6" fill="#dcaa4a" stroke="#7a5416" stroke-width="0.6"/><rect x="171.3" y="377.2" width="76.6" height="4.6" fill="url(#hx1)"/><rect x="171.3" y="384.6" width="76.6" height="6.8" fill="#d7e4b7" stroke="#7d8a5c" stroke-width="0.6"/><rect x="171.3" y="394.7" width="76.6" height="5.0" fill="#cc9638" stroke="#7a5416" stroke-width="0.6"/><rect x="171.3" y="394.7" width="76.6" height="5.0" fill="url(#hx2)"/><rect x="171.3" y="399.7" width="76.6" height="8.2" fill="#d7e4b7" stroke="#7d8a5c" stroke-width="0.6"/><rect x="171.3" y="407.9" width="76.6" height="4.6" fill="#cc9638" stroke="#7a5416" stroke-width="0.6"/><rect x="171.3" y="407.9" width="76.6" height="4.6" fill="url(#hx2)"/><rect x="171.3" y="415.1" width="76.6" height="7.3" fill="#d7e4b7" stroke="#7d8a5c" stroke-width="0.6"/><rect x="171.3" y="425.4" width="76.6" height="4.6" fill="#dcaa4a" stroke="#7a5416" stroke-width="0.6"/><rect x="171.3" y="425.4" width="76.6" height="4.6" fill="url(#hx1)"/><rect x="171.3" y="432.8" width="76.6" height="4.9" fill="#0b7d20" stroke="#075014" stroke-width="0.6"/><rect x="171.3" y="440.5" width="76.6" height="4.6" fill="#f01414" stroke="#a01010" stroke-width="0.6"/><rect x="171.3" y="448.2" width="76.6" height="4.7" fill="#8c3b3b" stroke="#5a2020" stroke-width="0.6"/><rect x="180.6" y="377.2" width="9.6" height="52.8" fill="#d3a043" stroke="#6b4a14" stroke-width="0.4"/><rect x="180.6" y="377.2" width="9.6" height="52.8" fill="url(#hx1)"/><rect x="183" y="377.2" width="5.3" height="51.8" fill="#fff" stroke="#6b4a14" stroke-width="0.4"/></svg>
<div style="position:absolute;top:323.28px;line-height:10.05px;font-size:8.05px;color:#1c1c1c;white-space:nowrap;left:276.3px;transform-origin:0 50%;transform:scaleX(1.002);">Material</div>
<div style="position:absolute;top:323.28px;line-height:10.05px;font-size:8.05px;color:#1c1c1c;white-space:nowrap;left:339.8px;transform-origin:0 50%;transform:scaleX(1.003);">Layer</div>
<div style="position:absolute;top:323.28px;line-height:10.05px;font-size:8.05px;color:#1c1c1c;white-space:nowrap;left:400.6px;transform-origin:0 50%;transform:scaleX(0.977);">Thickness</div>
<div style="position:absolute;top:323.28px;line-height:10.05px;font-size:8.05px;color:#1c1c1c;white-space:nowrap;left:441.7px;transform-origin:0 50%;transform:scaleX(1.000);">Dielectric Material</div>
<div style="position:absolute;top:323.28px;line-height:10.05px;font-size:8.05px;color:#1c1c1c;white-space:nowrap;left:510.8px;transform-origin:0 50%;transform:scaleX(0.986);">Type</div>
<div style="position:absolute;top:323.28px;line-height:10.05px;font-size:8.05px;color:#1c1c1c;white-space:nowrap;left:568.2px;transform-origin:0 50%;transform:scaleX(0.998);">Gerber</div>
<svg style="left:0;top:0" width="800" height="479" viewBox="0 0 800 479"><g fill="none" stroke="#383838" stroke-width="0.55"><path d="M247.9 356.5L274.5 339.2"/><path d="M247.9 364.2L274.5 350.8"/><path d="M247.9 371.6L274.5 362.4"/><path d="M247.9 379.5L274.5 374.1"/><path d="M247.9 388.0L274.5 385.7"/><path d="M247.9 397.2L274.5 397.3"/><path d="M247.9 403.8L274.5 408.9"/><path d="M247.9 410.2L274.5 420.5"/><path d="M247.9 418.8L274.5 432.2"/><path d="M247.9 427.7L274.5 443.8"/><path d="M247.9 435.2L274.5 455.4"/><path d="M247.9 442.8L274.5 467.0"/><path d="M247.9 450.5L274.5 478.6"/></g></svg>
<div style="position:absolute;top:334.88px;line-height:10.05px;font-size:8.05px;color:#b4b4b4;white-space:nowrap;left:339.8px;">Top Paste</div>
<div style="position:absolute;top:334.88px;line-height:10.05px;font-size:8.05px;color:#b4b4b4;white-space:nowrap;left:510.8px;">Paste Mask</div>
<div style="position:absolute;top:334.88px;line-height:10.05px;font-size:8.05px;color:#b4b4b4;white-space:nowrap;left:568.2px;">GTP</div>
<div style="position:absolute;top:346.50px;line-height:10.05px;font-size:8.05px;color:#b4b4b4;white-space:nowrap;left:339.8px;">Top Overlay</div>
<div style="position:absolute;top:346.50px;line-height:10.05px;font-size:8.05px;color:#b4b4b4;white-space:nowrap;left:510.8px;">Legend</div>
<div style="position:absolute;top:346.50px;line-height:10.05px;font-size:8.05px;color:#b4b4b4;white-space:nowrap;left:568.2px;">GTO</div>
<div style="position:absolute;top:358.12px;line-height:10.05px;font-size:8.05px;color:#b4b4b4;white-space:nowrap;left:276.3px;">Surface Material</div>
<div style="position:absolute;top:358.12px;line-height:10.05px;font-size:8.05px;color:#b4b4b4;white-space:nowrap;left:339.8px;">Top Solder</div>
<div style="position:absolute;top:358.12px;line-height:10.05px;font-size:8.05px;color:#b4b4b4;white-space:nowrap;left:400.6px;">0.01mm</div>
<div style="position:absolute;top:358.12px;line-height:10.05px;font-size:8.05px;color:#b4b4b4;white-space:nowrap;left:441.7px;">Solder Resist</div>
<div style="position:absolute;top:358.12px;line-height:10.05px;font-size:8.05px;color:#b4b4b4;white-space:nowrap;left:510.8px;">Solder Mask</div>
<div style="position:absolute;top:358.12px;line-height:10.05px;font-size:8.05px;color:#b4b4b4;white-space:nowrap;left:568.2px;">GTS</div>
<div style="position:absolute;top:369.74px;line-height:10.05px;font-size:8.05px;color:#151515;white-space:nowrap;left:276.3px;font-weight:bold;">Copper</div>
<div style="position:absolute;top:369.74px;line-height:10.05px;font-size:8.05px;color:#151515;white-space:nowrap;left:339.8px;font-weight:bold;">Top Layer</div>
<div style="position:absolute;top:369.74px;line-height:10.05px;font-size:8.05px;color:#151515;white-space:nowrap;left:400.6px;font-weight:bold;">0.04mm</div>
<div style="position:absolute;top:369.74px;line-height:10.05px;font-size:8.05px;color:#151515;white-space:nowrap;left:510.8px;font-weight:bold;">Signal</div>
<div style="position:absolute;top:369.74px;line-height:10.05px;font-size:8.05px;color:#151515;white-space:nowrap;left:568.2px;font-weight:bold;">GTL</div>
<div style="position:absolute;top:381.36px;line-height:10.05px;font-size:8.05px;color:#2a2a2a;white-space:nowrap;left:276.3px;font-style:italic;">Prepreg</div>
<div style="position:absolute;top:381.36px;line-height:10.05px;font-size:8.05px;color:#2a2a2a;white-space:nowrap;left:400.6px;font-style:italic;">0.23mm</div>
<div style="position:absolute;top:381.36px;line-height:10.05px;font-size:8.05px;color:#2a2a2a;white-space:nowrap;left:441.7px;font-style:italic;">FR-4</div>
<div style="position:absolute;top:381.36px;line-height:10.05px;font-size:8.05px;color:#2a2a2a;white-space:nowrap;left:510.8px;font-style:italic;">Dielectric</div>
<div style="position:absolute;top:392.97px;line-height:10.05px;font-size:8.05px;color:#151515;white-space:nowrap;left:276.3px;font-weight:bold;">Copper</div>
<div style="position:absolute;top:392.97px;line-height:10.05px;font-size:8.05px;color:#151515;white-space:nowrap;left:339.8px;font-weight:bold;">GND</div>
<div style="position:absolute;top:392.97px;line-height:10.05px;font-size:8.05px;color:#151515;white-space:nowrap;left:400.6px;font-weight:bold;">0.04mm</div>
<div style="position:absolute;top:392.97px;line-height:10.05px;font-size:8.05px;color:#151515;white-space:nowrap;left:510.8px;font-weight:bold;">Internal Plane</div>
<div style="position:absolute;top:392.97px;line-height:10.05px;font-size:8.05px;color:#151515;white-space:nowrap;left:568.2px;font-weight:bold;">GP1</div>
<div style="position:absolute;top:404.59px;line-height:10.05px;font-size:8.05px;color:#2a2a2a;white-space:nowrap;left:276.3px;font-style:italic;">Core</div>
<div style="position:absolute;top:404.59px;line-height:10.05px;font-size:8.05px;color:#2a2a2a;white-space:nowrap;left:400.6px;font-style:italic;">0.32mm</div>
<div style="position:absolute;top:404.59px;line-height:10.05px;font-size:8.05px;color:#2a2a2a;white-space:nowrap;left:441.7px;font-style:italic;">FR-4</div>
<div style="position:absolute;top:404.59px;line-height:10.05px;font-size:8.05px;color:#2a2a2a;white-space:nowrap;left:510.8px;font-style:italic;">Dielectric</div>
<div style="position:absolute;top:416.21px;line-height:10.05px;font-size:8.05px;color:#151515;white-space:nowrap;left:276.3px;font-weight:bold;">Copper</div>
<div style="position:absolute;top:416.21px;line-height:10.05px;font-size:8.05px;color:#151515;white-space:nowrap;left:339.8px;font-weight:bold;">PWR</div>
<div style="position:absolute;top:416.21px;line-height:10.05px;font-size:8.05px;color:#151515;white-space:nowrap;left:400.6px;font-weight:bold;">0.04mm</div>
<div style="position:absolute;top:416.21px;line-height:10.05px;font-size:8.05px;color:#151515;white-space:nowrap;left:510.8px;font-weight:bold;">Internal Plane</div>
<div style="position:absolute;top:416.21px;line-height:10.05px;font-size:8.05px;color:#151515;white-space:nowrap;left:568.2px;font-weight:bold;">GP2</div>
<div style="position:absolute;top:427.83px;line-height:10.05px;font-size:8.05px;color:#2a2a2a;white-space:nowrap;left:276.3px;font-style:italic;">Prepreg</div>
<div style="position:absolute;top:427.83px;line-height:10.05px;font-size:8.05px;color:#2a2a2a;white-space:nowrap;left:400.6px;font-style:italic;">0.23mm</div>
<div style="position:absolute;top:427.83px;line-height:10.05px;font-size:8.05px;color:#2a2a2a;white-space:nowrap;left:441.7px;font-style:italic;">FR-4</div>
<div style="position:absolute;top:427.83px;line-height:10.05px;font-size:8.05px;color:#2a2a2a;white-space:nowrap;left:510.8px;font-style:italic;">Dielectric</div>
<div style="position:absolute;top:439.45px;line-height:10.05px;font-size:8.05px;color:#151515;white-space:nowrap;left:276.3px;font-weight:bold;">Copper</div>
<div style="position:absolute;top:439.45px;line-height:10.05px;font-size:8.05px;color:#151515;white-space:nowrap;left:339.8px;font-weight:bold;">Bottom Layer</div>
<div style="position:absolute;top:439.45px;line-height:10.05px;font-size:8.05px;color:#151515;white-space:nowrap;left:400.6px;font-weight:bold;">0.04mm</div>
<div style="position:absolute;top:439.45px;line-height:10.05px;font-size:8.05px;color:#151515;white-space:nowrap;left:510.8px;font-weight:bold;">Signal</div>
<div style="position:absolute;top:439.45px;line-height:10.05px;font-size:8.05px;color:#151515;white-space:nowrap;left:568.2px;font-weight:bold;">GBL</div>
<div style="position:absolute;top:451.07px;line-height:10.05px;font-size:8.05px;color:#b4b4b4;white-space:nowrap;left:276.3px;">Surface Material</div>
<div style="position:absolute;top:451.07px;line-height:10.05px;font-size:8.05px;color:#b4b4b4;white-space:nowrap;left:339.8px;">Bottom Solder</div>
<div style="position:absolute;top:451.07px;line-height:10.05px;font-size:8.05px;color:#b4b4b4;white-space:nowrap;left:400.6px;">0.01mm</div>
<div style="position:absolute;top:451.07px;line-height:10.05px;font-size:8.05px;color:#b4b4b4;white-space:nowrap;left:441.7px;">Solder Resist</div>
<div style="position:absolute;top:451.07px;line-height:10.05px;font-size:8.05px;color:#b4b4b4;white-space:nowrap;left:510.8px;">Solder Mask</div>
<div style="position:absolute;top:451.07px;line-height:10.05px;font-size:8.05px;color:#b4b4b4;white-space:nowrap;left:568.2px;">GBS</div>
<div style="position:absolute;left:0px;top:460.7px;width:800px;height:13.8px;background:#3b3b3b;"></div>
<div style="position:absolute;left:0px;top:475px;width:800px;height:4px;background:#424244;"></div>
<div style="position:absolute;left:0px;top:478px;width:800px;height:1px;background:#45393a;"></div>
<div style="position:absolute;left:0px;top:460.7px;width:3.3px;height:18.3px;background:#48484a;"></div>
<div style="position:absolute;left:253.5px;top:462.5px;width:1px;height:11px;background:#2c2c2c;"></div>
<div style="position:absolute;left:506px;top:462.5px;width:1px;height:11px;background:#2c2c2c;"></div>
<div style="position:absolute;left:796px;top:41.5px;width:4px;height:420px;background:#3a3a3a;"></div>
<div style="position:absolute;top:463.60px;line-height:8px;font-size:6px;color:#dcdcdc;white-space:nowrap;left:272px;transform:translateX(-50%) scaleX(0.961);">Page 1 of 1</div>
<div style="position:absolute;top:463.60px;line-height:8px;font-size:6px;color:#dcdcdc;white-space:nowrap;left:533px;transform:translateX(-50%) scaleX(0.986);">Snapping: Enabled</div>
<div style="position:absolute;left:774px;top:465.5px;width:20px;height:7.5px;background:#575757;border-radius:1px;"></div>
<div style="position:absolute;top:465.10px;line-height:8.2px;font-size:6.2px;color:#f4f4f4;white-space:nowrap;left:777px;transform-origin:0 50%;transform:scaleX(0.818);">Panels</div>
<div style="position:absolute;left:606px;top:81.3px;width:174px;height:395px;background:#7a7a7a;"></div>
<div style="position:absolute;left:610.4px;top:85.8px;width:165.7px;height:387.5px;background:#3f3f3f;"></div>
<div style="position:absolute;left:610.4px;top:85.8px;width:165.7px;height:11.3px;background:#5680ae;"></div>
<div style="position:absolute;top:86.20px;line-height:9px;font-size:7px;color:#fff;white-space:nowrap;left:613px;transform-origin:0 50%;transform:scaleX(0.866);font-weight:bold;">Properties</div>
<svg style="left:759.6px;top:90.2px" width="3.4" height="2.2" viewBox="0 0 3.4 2.2"><path d="M0 0H3.4L1.7 2.2Z" fill="#f6f6f6"/></svg>
<svg style="left:768px;top:88.7px" width="4.4" height="4.4" viewBox="0 0 5 5"><path d="M0.5 0.5L4.5 4.5M4.5 0.5L0.5 4.5" stroke="#fff" stroke-width="1.2"/></svg>
<div style="position:absolute;top:100.65px;line-height:8.3px;font-size:6.3px;color:#d4d4d4;white-space:nowrap;left:616px;transform-origin:0 50%;transform:scaleX(0.971);">Drill Drawing View</div>
<div style="position:absolute;left:614px;top:113.3px;width:158px;height:11.3px;background:#2b2b2b;border-radius:2px;"></div>
<svg style="left:618px;top:115.6px" width="7" height="7" viewBox="0 0 7 7"><circle cx="2.8" cy="2.8" r="2.1" fill="none" stroke="#e4e4e4" stroke-width="0.8"/><path d="M4.4 4.4L6.4 6.6" stroke="#e4e4e4" stroke-width="1"/></svg>
<div style="position:absolute;top:115.65px;line-height:8.3px;font-size:6.3px;color:#e0e0e0;white-space:nowrap;left:627.3px;transform-origin:0 50%;transform:scaleX(0.877);">Search</div>
<svg style="left:614.5px;top:132.7px" width="3" height="3" viewBox="0 0 4 4"><path d="M3.8 0.2V3.8H0.2Z" fill="#e0e0e0"/></svg>
<div style="position:absolute;top:130.35px;line-height:8.5px;font-size:6.5px;color:#f4f4f4;white-space:nowrap;left:618.7px;transform-origin:0 50%;transform:scaleX(0.765);font-weight:bold;">Scale</div>
<div class="sec" style="top:139.6px;height:50px"></div>
<div style="position:absolute;top:145.05px;line-height:8.3px;font-size:6.3px;color:#d0d0d0;white-space:nowrap;right:154.70000000000005px;transform-origin:100% 50%;transform:scaleX(0.825);">Scale</div>
<div class="dd" style="left:651.8px;top:143.8px;width:117.0px;height:9.5px;background:#585858;"></div>
<div style="position:absolute;top:145.10px;line-height:8.3px;font-size:6.3px;color:#f0f0f0;white-space:nowrap;left:655.8px;transform-origin:0 50%;transform:scaleX(0.799);">1:1</div>
<div class="sep" style="top:159.3px"></div>
<div style="position:absolute;left:651.8px;top:165.8px;width:7.6px;height:7.4px;background:#565656;border:0.5px solid #666;border-radius:1px;"></div>
<div style="position:absolute;top:166.05px;line-height:8.3px;font-size:6.3px;color:#e6e6e6;white-space:nowrap;left:662px;transform-origin:0 50%;transform:scaleX(0.882);">Use Custom Scale</div>
<div style="position:absolute;left:651.8px;top:176.3px;width:117px;height:10px;background:#414141;border:0.6px solid #555;border-radius:1.5px;"></div>
<div style="position:absolute;top:177.85px;line-height:8.3px;font-size:6.3px;color:#8a8a8a;white-space:nowrap;left:655px;">1</div>
<svg style="left:614.5px;top:200.0px" width="3" height="3" viewBox="0 0 4 4"><path d="M3.8 0.2V3.8H0.2Z" fill="#e0e0e0"/></svg>
<div style="position:absolute;top:197.65px;line-height:8.5px;font-size:6.5px;color:#f4f4f4;white-space:nowrap;left:618.7px;transform-origin:0 50%;transform:scaleX(0.831);font-weight:bold;">Title</div>
<div class="sec" style="top:208px;height:88.3px"></div>
<div style="position:absolute;top:213.45px;line-height:8.3px;font-size:6.3px;color:#d0d0d0;white-space:nowrap;right:154.70000000000005px;transform-origin:100% 50%;transform:scaleX(0.926);">Title</div>
<div style="position:absolute;left:651.8px;top:212px;width:104.6px;height:9.8px;background:#2b2b2b;border-radius:1.5px;"></div>
<div style="position:absolute;top:213.45px;line-height:8.3px;font-size:6.3px;color:#f4f4f4;white-space:nowrap;left:654.6px;transform-origin:0 50%;transform:scaleX(0.926);">Drill Drawing View (Scale =ViewScale)</div>
<div style="position:absolute;left:758.3px;top:212px;width:10.7px;height:9.8px;background:#5c5c5c;border:0.5px solid #4a4a4a;border-radius:1.5px;"></div>
<svg style="left:760.6px;top:214.6px" width="6" height="4.6" viewBox="0 0 6 4.6"><ellipse cx="3" cy="2.3" rx="2.8" ry="2" fill="#f0f0f0"/><circle cx="3" cy="2.3" r="1" fill="#444"/></svg>
<div class="sep" style="top:227px"></div>
<div style="position:absolute;top:236.45px;line-height:8.3px;font-size:6.3px;color:#d0d0d0;white-space:nowrap;right:154.70000000000005px;transform-origin:100% 50%;transform:scaleX(0.949);">Location</div>
<div class="dd" style="left:651.8px;top:235.2px;width:117.0px;height:9.800000000000011px;background:#585858;"></div>
<div style="position:absolute;top:236.65px;line-height:8.3px;font-size:6.3px;color:#f0f0f0;white-space:nowrap;left:655.8px;transform-origin:0 50%;transform:scaleX(0.919);">Left-Above</div>
<div class="sep" style="top:251.2px"></div>
<div style="position:absolute;left:651.8px;top:258.6px;width:7.6px;height:7.2px;background:#565656;border:0.5px solid #666;border-radius:1px;"></div>
<svg style="left:653px;top:260px" width="5.4" height="4.6" viewBox="0 0 5.4 4.6"><path d="M0.5 2.2L2 3.8L4.9 0.6" fill="none" stroke="#f4f4f4" stroke-width="1"/></svg>
<div style="position:absolute;top:258.85px;line-height:8.3px;font-size:6.3px;color:#e6e6e6;white-space:nowrap;left:662px;transform-origin:0 50%;transform:scaleX(0.937);">Use Document Font</div>
<div style="position:absolute;top:268.35px;line-height:8.3px;font-size:6.3px;color:#d0d0d0;white-space:nowrap;right:154.70000000000005px;transform-origin:100% 50%;transform:scaleX(0.952);">Font</div>
<div class="dd" style="left:651.8px;top:269.6px;width:68.20000000000005px;height:9.599999999999966px;background:#484848;border-color:#4c4c4c;"></div>
<div style="position:absolute;top:270.95px;line-height:8.3px;font-size:6.3px;color:#9a9a9a;white-space:nowrap;left:655.8px;"></div>
<div style="position:absolute;top:270.95px;line-height:8.3px;font-size:6.3px;color:#8c8c8c;white-space:nowrap;left:664.5px;transform-origin:0 50%;transform:scaleX(0.952);">Arial</div>
<div style="position:absolute;top:271.35px;line-height:7.5px;font-size:5.5px;color:#6a6a6a;white-space:nowrap;left:655.5px;font-style:italic;">T</div>
<div class="dd" style="left:723px;top:269.6px;width:32.5px;height:9.599999999999966px;background:#484848;border-color:#4c4c4c;"></div>
<div style="position:absolute;top:270.95px;line-height:8.3px;font-size:6.3px;color:#9a9a9a;white-space:nowrap;left:727px;transform-origin:0 50%;transform:scaleX(0.928);">14</div>
<div style="position:absolute;left:758.8px;top:270px;width:9.4px;height:9px;background:#2b2b2b;border:0.6px solid #555;border-radius:1px;"></div>
<div style="position:absolute;left:651.8px;top:282px;width:23.6px;height:10.8px;background:#4a4a4a;border:0.6px solid #565656;border-radius:1px;"></div>
<div style="position:absolute;top:283.20px;line-height:9.4px;font-size:7.4px;color:#a6a6a6;white-space:nowrap;left:663.5px;transform:translateX(-50%);font-weight:bold;">B</div>
<div style="position:absolute;left:675.1999999999999px;top:282px;width:23.6px;height:10.8px;background:#4a4a4a;border:0.6px solid #565656;border-radius:1px;"></div>
<div style="position:absolute;top:283.20px;line-height:9.4px;font-size:7.4px;color:#a6a6a6;white-space:nowrap;left:686.9px;transform:translateX(-50%);font-style:italic;font-family:'Liberation Serif',serif;">I</div>
<div style="position:absolute;left:698.5999999999999px;top:282px;width:23.6px;height:10.8px;background:#4a4a4a;border:0.6px solid #565656;border-radius:1px;"></div>
<div style="position:absolute;top:283.20px;line-height:9.4px;font-size:7.4px;color:#a6a6a6;white-space:nowrap;left:710.3px;transform:translateX(-50%);text-decoration:underline;">U</div>
<div style="position:absolute;left:722.0px;top:282px;width:23.6px;height:10.8px;background:#4a4a4a;border:0.6px solid #565656;border-radius:1px;"></div>
<div style="position:absolute;top:283.20px;line-height:9.4px;font-size:7.4px;color:#a6a6a6;white-space:nowrap;left:733.7px;transform:translateX(-50%);text-decoration:line-through;">T</div>
<div style="position:absolute;left:745.4px;top:282px;width:23.6px;height:10.8px;background:#4a4a4a;border:0.6px solid #565656;border-radius:1px;"></div>
<div style="position:absolute;top:283.20px;line-height:9.4px;font-size:7.4px;color:#a6a6a6;white-space:nowrap;left:757.1px;transform:translateX(-50%);">N</div>
<svg style="left:614.5px;top:308.0px" width="3" height="3" viewBox="0 0 4 4"><path d="M3.8 0.2V3.8H0.2Z" fill="#e0e0e0"/></svg>
<div style="position:absolute;top:305.65px;line-height:8.5px;font-size:6.5px;color:#f4f4f4;white-space:nowrap;left:618.7px;transform-origin:0 50%;transform:scaleX(0.837);font-weight:bold;">Style</div>
<div class="sec" style="top:315.5px;height:29.6px"></div>
<div style="position:absolute;top:318.45px;line-height:8.3px;font-size:6.3px;color:#d0d0d0;white-space:nowrap;right:154.70000000000005px;transform-origin:100% 50%;transform:scaleX(0.935);">Board Line</div>
<div style="position:absolute;left:653.8px;top:322.6px;width:113.2px;height:1.5px;background:#0a0a0a;"></div>
<div class="dd" style="left:651.8px;top:332px;width:50.80000000000007px;height:9.300000000000011px;background:#585858;"></div>
<div style="position:absolute;top:333.20px;line-height:8.3px;font-size:6.3px;color:#f0f0f0;white-space:nowrap;left:655.8px;transform-origin:0 50%;transform:scaleX(0.930);">Thick</div>
<div class="dd" style="left:705.5px;top:332px;width:48.299999999999955px;height:9.300000000000011px;background:#585858;"></div>
<div style="position:absolute;top:333.20px;line-height:8.3px;font-size:6.3px;color:#f0f0f0;white-space:nowrap;left:709.5px;transform-origin:0 50%;transform:scaleX(0.928);">Solid</div>
<div style="position:absolute;left:758.8px;top:332.2px;width:9.4px;height:9px;background:#000;border:0.6px solid #666;border-radius:1px;"></div>
<svg style="left:614.5px;top:356.0px" width="3" height="3" viewBox="0 0 4 4"><path d="M3.8 0.2V3.8H0.2Z" fill="#e0e0e0"/></svg>
<div style="position:absolute;top:353.65px;line-height:8.5px;font-size:6.5px;color:#f4f4f4;white-space:nowrap;left:618.7px;transform-origin:0 50%;transform:scaleX(0.855);font-weight:bold;">Properties</div>
<div class="sec" style="top:363px;height:57.4px"></div>
<div style="position:absolute;top:368.45px;line-height:8.3px;font-size:6.3px;color:#d0d0d0;white-space:nowrap;right:154.70000000000005px;transform-origin:100% 50%;transform:scaleX(0.923);">View</div>
<div class="dd" style="left:651.8px;top:367.2px;width:117.0px;height:9.199999999999989px;background:#585858;"></div>
<div style="position:absolute;top:368.35px;line-height:8.3px;font-size:6.3px;color:#f0f0f0;white-space:nowrap;left:655.8px;transform-origin:0 50%;transform:scaleX(0.984);">Top</div>
<div style="position:absolute;top:380.25px;line-height:8.3px;font-size:6.3px;color:#d0d0d0;white-space:nowrap;right:154.70000000000005px;transform-origin:100% 50%;transform:scaleX(0.972);">Rotation</div>
<div class="dd" style="left:651.8px;top:380.2px;width:117.0px;height:9.199999999999989px;background:#585858;"></div>
<div style="position:absolute;top:381.35px;line-height:8.3px;font-size:6.3px;color:#f0f0f0;white-space:nowrap;left:655.8px;transform-origin:0 50%;transform:scaleX(0.913);">0°</div>
<div style="position:absolute;top:392.95px;line-height:8.3px;font-size:6.3px;color:#d0d0d0;white-space:nowrap;right:154.70000000000005px;transform-origin:100% 50%;transform:scaleX(0.894);">Layer Pairs</div>
<div class="dd" style="left:651.8px;top:393.2px;width:117.0px;height:9.100000000000023px;background:#585858;"></div>
<div style="position:absolute;top:394.30px;line-height:8.3px;font-size:6.3px;color:#f0f0f0;white-space:nowrap;left:655.8px;transform-origin:0 50%;transform:scaleX(0.868);">All Layers</div>
<div style="position:absolute;left:651.8px;top:406.2px;width:117px;height:10.6px;background:#4a4a4a;border:0.6px solid #5e5e5e;border-radius:1.5px;"></div>
<div style="position:absolute;top:408.05px;line-height:8.3px;font-size:6.3px;color:#f0f0f0;white-space:nowrap;left:710.5px;transform:translateX(-50%) scaleX(0.925);">Drill Symbols</div>
<div style="position:absolute;top:462.65px;line-height:8.3px;font-size:6.3px;color:#e0e0e0;white-space:nowrap;left:613.8px;transform-origin:0 50%;transform:scaleX(0.952);">1 object is displayed</div>
<div style="position:absolute;left:419.7px;top:43.8px;width:105.3px;height:14px;background:#393939;border-radius:1.5px;"></div>
<svg style="left:424.2px;top:46.5px" width="9" height="9" viewBox="0 0 9 9"><path d="M1.3 0.6V8.4M7.7 0.6V8.4" fill="none" stroke="#e2a93c" stroke-width="1.2" stroke-dasharray="1.3 0.7"/><path d="M1.3 0.9H7.7M1.3 8.1H7.7" stroke="#777" stroke-width="0.6"/></svg>
<svg style="left:438.8px;top:46.5px" width="9" height="9" viewBox="0 0 9 9"><path d="M4.6 8.4H8.2V1.2L6.6 2.8V5.4Z" fill="#3fa84a"/><path d="M1.2 8V3.6C1.2 0.6 5.6 0.6 5.6 3.2C5.6 4.8 4.2 5.2 3.2 5V8" fill="none" stroke="#e9c440" stroke-width="1.5"/></svg>
<svg style="left:453.5px;top:46.5px" width="9" height="9" viewBox="0 0 9 9"><rect x="0.5" y="3.4" width="5" height="4.8" fill="#2a9d86"/><circle cx="5.2" cy="3.8" r="3" fill="#7fd8cf" stroke="#2f8f96" stroke-width="0.7"/><circle cx="4.6" cy="3.2" r="1.1" fill="#e8fffb"/></svg>
<svg style="left:467.7px;top:46.5px" width="9" height="9" viewBox="0 0 9 9"><path d="M1.2 1.5V8H7.8V1.5" fill="none" stroke="#4f8ee0" stroke-width="1"/><rect x="3.2" y="3.6" width="2.8" height="3.4" fill="none" stroke="#4f8ee0" stroke-width="0.7"/><path d="M0.4 1.2H2.4M6.6 1.2H8.6" stroke="#e07a3c" stroke-width="0.9"/></svg>
<svg style="left:482.0px;top:46.5px" width="9" height="9" viewBox="0 0 9 9"><path d="M1.4 7.2L3.6 4.4H5.6L7.4 2.6" fill="none" stroke="#4b8be0" stroke-width="1.1"/><circle cx="1.5" cy="7.2" r="1.1" fill="#4b8be0"/><path d="M6.2 1.2H8V3" fill="none" stroke="#8fb8ee" stroke-width="0.7"/></svg>
<svg style="left:496.5px;top:46.5px" width="9" height="9" viewBox="0 0 9 9"><rect x="0.6" y="1" width="7.8" height="7" fill="#f2f4f8"/><rect x="0.6" y="1" width="7.8" height="1.8" fill="#4b8be0"/><rect x="1.6" y="4.4" width="5.8" height="1.6" fill="#8a8a8a"/></svg>
<svg style="left:511.20000000000005px;top:46.5px" width="9" height="9" viewBox="0 0 9 9"><path d="M1 8L8 1" stroke="#4b8be0" stroke-width="1.2"/></svg>
<svg style="left:461.2px;top:54.2px" width="2.4" height="2.4" viewBox="0 0 4 4"><path d="M3.8 0.2V3.8H0.2Z" fill="#bbb"/></svg>
<svg style="left:475.4px;top:54.2px" width="2.4" height="2.4" viewBox="0 0 4 4"><path d="M3.8 0.2V3.8H0.2Z" fill="#bbb"/></svg>
<svg style="left:489.7px;top:54.2px" width="2.4" height="2.4" viewBox="0 0 4 4"><path d="M3.8 0.2V3.8H0.2Z" fill="#bbb"/></svg>
<svg style="left:504.2px;top:54.2px" width="2.4" height="2.4" viewBox="0 0 4 4"><path d="M3.8 0.2V3.8H0.2Z" fill="#bbb"/></svg>
<svg style="left:518.9000000000001px;top:54.2px" width="2.4" height="2.4" viewBox="0 0 4 4"><path d="M3.8 0.2V3.8H0.2Z" fill="#bbb"/></svg>
</div></body></html>
